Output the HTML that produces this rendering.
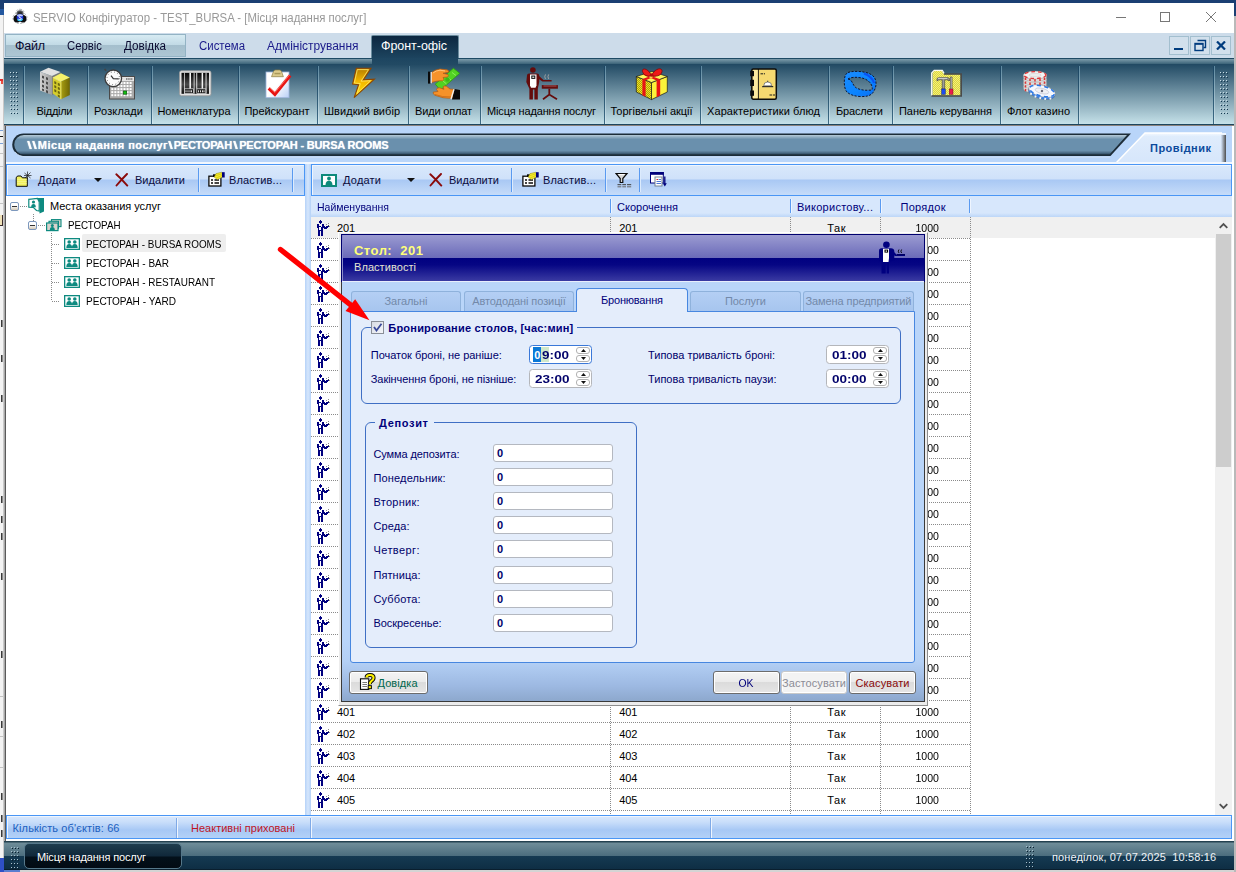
<!DOCTYPE html>
<html lang="uk"><head><meta charset="utf-8"><title>SERVIO Конфігуратор - TEST_BURSA - [Місця надання послуг]</title>
<style>
html,body{margin:0;padding:0;background:#fff;}
body{width:1236px;height:872px;overflow:hidden;font-family:"Liberation Sans",sans-serif;font-size:11px;}
#root{position:relative;width:1236px;height:872px;overflow:hidden;background:#fff;}
#root div,#root span.t,#root svg{position:absolute;box-sizing:border-box;}
span.t{white-space:pre;display:block;}

</style></head>
<body>
<div id="root">
<div style="left:0px;top:0px;width:1236px;height:872px;background:#f3f3f3;"></div>
<div style="left:0px;top:0px;width:1236px;height:3px;background:#1b3f73;"></div>
<div style="left:0px;top:0px;width:4px;height:9px;background:#1b3f73;"></div>
<div style="left:0px;top:9px;width:4px;height:6px;background:#2458a0;"></div>
<div style="left:1234px;top:0px;width:2px;height:16px;background:#1b3f73;"></div>
<div style="left:1234px;top:16px;width:2px;height:856px;background:#b9b9b9;"></div>
<div style="left:3px;top:15px;width:1px;height:857px;background:#c9c9c9;"></div>
<div style="left:0px;top:136px;width:3px;height:1px;background:#1a1a1a;"></div>
<div style="left:0px;top:130px;width:3px;height:1px;background:#7aa0d8;"></div>
<div style="left:0px;top:143px;width:3px;height:1px;background:#7aa0d8;"></div>
<div style="left:0px;top:153px;width:3px;height:1px;background:#c4c4c4;"></div>
<div style="left:0px;top:166px;width:3px;height:1px;background:#c4c4c4;"></div>
<div style="left:0px;top:203px;width:3px;height:1px;background:#c4c4c4;"></div>
<div style="left:0px;top:696px;width:3px;height:1px;background:#c4c4c4;"></div>
<div style="left:0px;top:736px;width:3px;height:1px;background:#c4c4c4;"></div>
<div style="left:0px;top:767px;width:3px;height:1px;background:#c4c4c4;"></div>
<div style="left:0px;top:215px;width:3px;height:11px;background:#f0e2b8;border-right:1px solid #3a2a2a;border-bottom:1px solid #3a2a2a;"></div>
<div style="left:0px;top:320px;width:3px;height:7px;background:linear-gradient(90deg,#f3f3f3 0 1px,#3a3a3a 1px 2px,#8a8a8a 2px 3px);"></div>
<div style="left:0px;top:355px;width:3px;height:7px;background:linear-gradient(90deg,#f3f3f3 0 1px,#3a3a3a 1px 2px,#8a8a8a 2px 3px);"></div>
<div style="left:0px;top:395px;width:3px;height:7px;background:linear-gradient(90deg,#f3f3f3 0 1px,#3a3a3a 1px 2px,#8a8a8a 2px 3px);"></div>
<div style="left:0px;top:496px;width:3px;height:7px;background:linear-gradient(90deg,#f3f3f3 0 1px,#3a3a3a 1px 2px,#8a8a8a 2px 3px);"></div>
<div style="left:0px;top:516px;width:3px;height:7px;background:linear-gradient(90deg,#f3f3f3 0 1px,#3a3a3a 1px 2px,#8a8a8a 2px 3px);"></div>
<div style="left:0px;top:533px;width:3px;height:7px;background:linear-gradient(90deg,#f3f3f3 0 1px,#3a3a3a 1px 2px,#8a8a8a 2px 3px);"></div>
<div style="left:0px;top:573px;width:3px;height:7px;background:linear-gradient(90deg,#f3f3f3 0 1px,#3a3a3a 1px 2px,#8a8a8a 2px 3px);"></div>
<div style="left:0px;top:651px;width:3px;height:7px;background:linear-gradient(90deg,#f3f3f3 0 1px,#3a3a3a 1px 2px,#8a8a8a 2px 3px);"></div>
<div style="left:0px;top:721px;width:3px;height:7px;background:linear-gradient(90deg,#f3f3f3 0 1px,#3a3a3a 1px 2px,#8a8a8a 2px 3px);"></div>
<div style="left:0px;top:793px;width:3px;height:7px;background:linear-gradient(90deg,#f3f3f3 0 1px,#3a3a3a 1px 2px,#8a8a8a 2px 3px);"></div>
<div style="left:0px;top:815px;width:3px;height:7px;background:linear-gradient(90deg,#f3f3f3 0 1px,#3a3a3a 1px 2px,#8a8a8a 2px 3px);"></div>
<div style="left:0px;top:830px;width:3px;height:7px;background:linear-gradient(90deg,#f3f3f3 0 1px,#3a3a3a 1px 2px,#8a8a8a 2px 3px);"></div>
<div style="left:0px;top:79px;width:3px;height:2px;background:#e03030;"></div>
<div style="left:1px;top:81px;width:2px;height:3px;background:#e85040;"></div>
<div style="left:4px;top:3px;width:1230px;height:868px;background:#fff;"></div>
<svg style="left:11px;top:8px" width="18" height="18" viewBox="0 0 18 18"><path d="M9 1.300Q13 1.300 13.300 5.500Q16.800 7.500 15.800 11.500Q14.500 15.500 9 15.500Q3.500 15.500 2.200 11.500Q1.200 7.500 4.700 5.500Q5 1.300 9 1.300z" fill="none" stroke="#8a8f96" stroke-width="0.700" stroke-dasharray="2 1.300"/><circle cx="9" cy="5.800" r="3.600" fill="#55585e"/><circle cx="9" cy="5.800" r="2.200" fill="#2a2c30"/><circle cx="6.200" cy="10.800" r="3.700" fill="#0c0c0e"/><circle cx="11.800" cy="10.800" r="3.700" fill="#0c0c0e"/><circle cx="9" cy="9.300" r="3.300" fill="#2338d8"/><path d="M6.300 7.800Q9 5.800 11.700 7.800" stroke="#c8d4ff" stroke-width="1.200" fill="none"/><path d="M6.500 11.300Q9 13.600 11.600 11.100" stroke="#35c8f5" stroke-width="1.700" fill="none"/><path d="M10.600 8Q9 7.200 7.900 8.200Q7.500 9.300 9 9.600Q10.700 10 10.200 11.100Q9 11.900 7.500 11.100" stroke="#e8eeff" stroke-width="1" fill="none"/></svg>
<span class="t" style="left:33.00px;top:10.04px;font-size:12px;line-height:16px;color:#999;transform:scaleX(0.9489);transform-origin:0 50%;">SERVIO Конфігуратор - TEST_BURSA - [Місця надання послуг]</span>
<div style="left:1116px;top:17px;width:10px;height:1px;background:#777;"></div>
<div style="left:1160px;top:12px;width:10px;height:10px;border:1px solid #777;"></div>
<svg style="left:1206px;top:12px" width="10" height="10" viewBox="0 0 10 10"><path d="M0 0L10 10M10 0L0 10" stroke="#777" stroke-width="1"/></svg>
<div style="left:4px;top:33px;width:1230px;height:25px;background:#cddcea;"></div>
<div style="left:5px;top:34px;width:181px;height:23px;background:linear-gradient(#d7ebf3 0%,#c2dae5 46%,#a5bfcd 50%,#adc6d3 100%);border:1px solid #93b3c4;"></div>
<span class="t" style="left:15.00px;top:37.62px;font-size:12.5px;line-height:16.5px;color:#0a0a30;letter-spacing:-0.244px;">Файл</span>
<span class="t" style="left:67.00px;top:37.62px;font-size:12.5px;line-height:16.5px;color:#0a0a30;transform:scaleX(0.9068);transform-origin:0 50%;">Сервіс</span>
<span class="t" style="left:124.00px;top:37.62px;font-size:12.5px;line-height:16.5px;color:#0a0a30;transform:scaleX(0.9341);transform-origin:0 50%;">Довідка</span>
<span class="t" style="left:198.50px;top:37.62px;font-size:12.5px;line-height:16.5px;color:#1a1a8a;transform:scaleX(0.9138);transform-origin:0 50%;">Система</span>
<span class="t" style="left:267.00px;top:37.62px;font-size:12.5px;line-height:16.5px;color:#1a1a8a;transform:scaleX(0.9557);transform-origin:0 50%;">Адміністрування</span>
<div style="left:371px;top:35px;width:88px;height:24px;background:linear-gradient(#0c2740,#1d4560);border:1px solid #6a8c9e;border-bottom:none;border-radius:2px 2px 0 0;"></div>
<span class="t" style="left:381.00px;top:37.62px;font-size:12.5px;line-height:16.5px;color:#fff;letter-spacing:-0.051px;">Фронт-офіс</span>
<div style="left:1169px;top:36px;width:20px;height:19px;border:1px solid #a3bfcf;background:#d2e0ec;"></div>
<div style="left:1190px;top:36px;width:20px;height:19px;border:1px solid #a3bfcf;background:#d2e0ec;"></div>
<div style="left:1211px;top:36px;width:20px;height:19px;border:1px solid #a3bfcf;background:#d2e0ec;"></div>
<div style="left:1174px;top:48px;width:9px;height:2px;background:#003c7e;"></div>
<svg style="left:1194px;top:39px" width="13" height="13" viewBox="0 0 13 13"><path d="M3.5 1.5h8v7h-2" stroke="#003c7e" stroke-width="1.4" fill="none"/><rect x="1" y="4.5" width="8" height="7" stroke="#003c7e" stroke-width="1.4" fill="none"/><path d="M1 5h8" stroke="#003c7e" stroke-width="1.6"/></svg>
<svg style="left:1216px;top:41px" width="10" height="9" viewBox="0 0 10 9"><path d="M1 0.5L9 8.5M9 0.5L1 8.5" stroke="#003c7e" stroke-width="2.2"/></svg>
<div style="left:4px;top:58px;width:1230px;height:67px;background:linear-gradient(#1e4a64 0px,#1e4a64 1px,#7d9cab 1px,#3a6278 6px,#224a64 6.500px,#c4e0e8 65.500px,#1e465e 65.500px,#1e465e 67px);"></div>
<div style="left:372px;top:58px;width:86px;height:7px;background:linear-gradient(#1d4560,#224a64);"></div>
<div style="left:23px;top:66px;width:1px;height:58px;background:linear-gradient(#1c4663,#3d6a84);"></div>
<div style="left:24px;top:66px;width:1px;height:58px;background:linear-gradient(#5d889f,#d4e9f0);"></div>
<div style="left:87px;top:66px;width:1px;height:58px;background:linear-gradient(#1c4663,#3d6a84);"></div>
<div style="left:88px;top:66px;width:1px;height:58px;background:linear-gradient(#5d889f,#d4e9f0);"></div>
<div style="left:151px;top:66px;width:1px;height:58px;background:linear-gradient(#1c4663,#3d6a84);"></div>
<div style="left:152px;top:66px;width:1px;height:58px;background:linear-gradient(#5d889f,#d4e9f0);"></div>
<div style="left:238px;top:66px;width:1px;height:58px;background:linear-gradient(#1c4663,#3d6a84);"></div>
<div style="left:239px;top:66px;width:1px;height:58px;background:linear-gradient(#5d889f,#d4e9f0);"></div>
<div style="left:317px;top:66px;width:1px;height:58px;background:linear-gradient(#1c4663,#3d6a84);"></div>
<div style="left:318px;top:66px;width:1px;height:58px;background:linear-gradient(#5d889f,#d4e9f0);"></div>
<div style="left:408px;top:66px;width:1px;height:58px;background:linear-gradient(#1c4663,#3d6a84);"></div>
<div style="left:409px;top:66px;width:1px;height:58px;background:linear-gradient(#5d889f,#d4e9f0);"></div>
<div style="left:480px;top:66px;width:1px;height:58px;background:linear-gradient(#1c4663,#3d6a84);"></div>
<div style="left:481px;top:66px;width:1px;height:58px;background:linear-gradient(#5d889f,#d4e9f0);"></div>
<div style="left:604px;top:66px;width:1px;height:58px;background:linear-gradient(#1c4663,#3d6a84);"></div>
<div style="left:605px;top:66px;width:1px;height:58px;background:linear-gradient(#5d889f,#d4e9f0);"></div>
<div style="left:700px;top:66px;width:1px;height:58px;background:linear-gradient(#1c4663,#3d6a84);"></div>
<div style="left:701px;top:66px;width:1px;height:58px;background:linear-gradient(#5d889f,#d4e9f0);"></div>
<div style="left:828px;top:66px;width:1px;height:58px;background:linear-gradient(#1c4663,#3d6a84);"></div>
<div style="left:829px;top:66px;width:1px;height:58px;background:linear-gradient(#5d889f,#d4e9f0);"></div>
<div style="left:892px;top:66px;width:1px;height:58px;background:linear-gradient(#1c4663,#3d6a84);"></div>
<div style="left:893px;top:66px;width:1px;height:58px;background:linear-gradient(#5d889f,#d4e9f0);"></div>
<div style="left:1000px;top:66px;width:1px;height:58px;background:linear-gradient(#1c4663,#3d6a84);"></div>
<div style="left:1001px;top:66px;width:1px;height:58px;background:linear-gradient(#5d889f,#d4e9f0);"></div>
<div style="left:1078px;top:66px;width:1px;height:58px;background:linear-gradient(#1c4663,#3d6a84);"></div>
<div style="left:1079px;top:66px;width:1px;height:58px;background:linear-gradient(#5d889f,#d4e9f0);"></div>
<div style="left:1213px;top:66px;width:1px;height:58px;background:linear-gradient(#1c4663,#3d6a84);"></div>
<div style="left:1214px;top:66px;width:1px;height:58px;background:linear-gradient(#5d889f,#d4e9f0);"></div>
<svg style="left:10px;top:72px" width="9" height="44"><rect x="0" y="0" width="1" height="1" fill="#c9dde6"/><rect x="1" y="1" width="1" height="1" fill="#15384f"/><rect x="3" y="0" width="1" height="1" fill="#c9dde6"/><rect x="4" y="1" width="1" height="1" fill="#15384f"/><rect x="6" y="0" width="1" height="1" fill="#c9dde6"/><rect x="7" y="1" width="1" height="1" fill="#15384f"/><rect x="0" y="4" width="1" height="1" fill="#c9dde6"/><rect x="1" y="5" width="1" height="1" fill="#15384f"/><rect x="3" y="4" width="1" height="1" fill="#c9dde6"/><rect x="4" y="5" width="1" height="1" fill="#15384f"/><rect x="6" y="4" width="1" height="1" fill="#c9dde6"/><rect x="7" y="5" width="1" height="1" fill="#15384f"/><rect x="0" y="8" width="1" height="1" fill="#c9dde6"/><rect x="1" y="9" width="1" height="1" fill="#15384f"/><rect x="3" y="8" width="1" height="1" fill="#c9dde6"/><rect x="4" y="9" width="1" height="1" fill="#15384f"/><rect x="6" y="8" width="1" height="1" fill="#c9dde6"/><rect x="7" y="9" width="1" height="1" fill="#15384f"/><rect x="0" y="12" width="1" height="1" fill="#c9dde6"/><rect x="1" y="13" width="1" height="1" fill="#15384f"/><rect x="3" y="12" width="1" height="1" fill="#c9dde6"/><rect x="4" y="13" width="1" height="1" fill="#15384f"/><rect x="6" y="12" width="1" height="1" fill="#c9dde6"/><rect x="7" y="13" width="1" height="1" fill="#15384f"/><rect x="0" y="16" width="1" height="1" fill="#c9dde6"/><rect x="1" y="17" width="1" height="1" fill="#15384f"/><rect x="3" y="16" width="1" height="1" fill="#c9dde6"/><rect x="4" y="17" width="1" height="1" fill="#15384f"/><rect x="6" y="16" width="1" height="1" fill="#c9dde6"/><rect x="7" y="17" width="1" height="1" fill="#15384f"/><rect x="0" y="20" width="1" height="1" fill="#c9dde6"/><rect x="1" y="21" width="1" height="1" fill="#15384f"/><rect x="3" y="20" width="1" height="1" fill="#c9dde6"/><rect x="4" y="21" width="1" height="1" fill="#15384f"/><rect x="6" y="20" width="1" height="1" fill="#c9dde6"/><rect x="7" y="21" width="1" height="1" fill="#15384f"/><rect x="0" y="24" width="1" height="1" fill="#c9dde6"/><rect x="1" y="25" width="1" height="1" fill="#15384f"/><rect x="3" y="24" width="1" height="1" fill="#c9dde6"/><rect x="4" y="25" width="1" height="1" fill="#15384f"/><rect x="6" y="24" width="1" height="1" fill="#c9dde6"/><rect x="7" y="25" width="1" height="1" fill="#15384f"/><rect x="0" y="28" width="1" height="1" fill="#c9dde6"/><rect x="1" y="29" width="1" height="1" fill="#15384f"/><rect x="3" y="28" width="1" height="1" fill="#c9dde6"/><rect x="4" y="29" width="1" height="1" fill="#15384f"/><rect x="6" y="28" width="1" height="1" fill="#c9dde6"/><rect x="7" y="29" width="1" height="1" fill="#15384f"/><rect x="0" y="32" width="1" height="1" fill="#c9dde6"/><rect x="1" y="33" width="1" height="1" fill="#15384f"/><rect x="3" y="32" width="1" height="1" fill="#c9dde6"/><rect x="4" y="33" width="1" height="1" fill="#15384f"/><rect x="6" y="32" width="1" height="1" fill="#c9dde6"/><rect x="7" y="33" width="1" height="1" fill="#15384f"/><rect x="0" y="36" width="1" height="1" fill="#c9dde6"/><rect x="1" y="37" width="1" height="1" fill="#15384f"/><rect x="3" y="36" width="1" height="1" fill="#c9dde6"/><rect x="4" y="37" width="1" height="1" fill="#15384f"/><rect x="6" y="36" width="1" height="1" fill="#c9dde6"/><rect x="7" y="37" width="1" height="1" fill="#15384f"/><rect x="0" y="40" width="1" height="1" fill="#c9dde6"/><rect x="1" y="41" width="1" height="1" fill="#15384f"/><rect x="3" y="40" width="1" height="1" fill="#c9dde6"/><rect x="4" y="41" width="1" height="1" fill="#15384f"/><rect x="6" y="40" width="1" height="1" fill="#c9dde6"/><rect x="7" y="41" width="1" height="1" fill="#15384f"/></svg>
<svg style="left:1220px;top:72px" width="9" height="44"><rect x="0" y="0" width="1" height="1" fill="#c9dde6"/><rect x="1" y="1" width="1" height="1" fill="#15384f"/><rect x="3" y="0" width="1" height="1" fill="#c9dde6"/><rect x="4" y="1" width="1" height="1" fill="#15384f"/><rect x="6" y="0" width="1" height="1" fill="#c9dde6"/><rect x="7" y="1" width="1" height="1" fill="#15384f"/><rect x="0" y="4" width="1" height="1" fill="#c9dde6"/><rect x="1" y="5" width="1" height="1" fill="#15384f"/><rect x="3" y="4" width="1" height="1" fill="#c9dde6"/><rect x="4" y="5" width="1" height="1" fill="#15384f"/><rect x="6" y="4" width="1" height="1" fill="#c9dde6"/><rect x="7" y="5" width="1" height="1" fill="#15384f"/><rect x="0" y="8" width="1" height="1" fill="#c9dde6"/><rect x="1" y="9" width="1" height="1" fill="#15384f"/><rect x="3" y="8" width="1" height="1" fill="#c9dde6"/><rect x="4" y="9" width="1" height="1" fill="#15384f"/><rect x="6" y="8" width="1" height="1" fill="#c9dde6"/><rect x="7" y="9" width="1" height="1" fill="#15384f"/><rect x="0" y="12" width="1" height="1" fill="#c9dde6"/><rect x="1" y="13" width="1" height="1" fill="#15384f"/><rect x="3" y="12" width="1" height="1" fill="#c9dde6"/><rect x="4" y="13" width="1" height="1" fill="#15384f"/><rect x="6" y="12" width="1" height="1" fill="#c9dde6"/><rect x="7" y="13" width="1" height="1" fill="#15384f"/><rect x="0" y="16" width="1" height="1" fill="#c9dde6"/><rect x="1" y="17" width="1" height="1" fill="#15384f"/><rect x="3" y="16" width="1" height="1" fill="#c9dde6"/><rect x="4" y="17" width="1" height="1" fill="#15384f"/><rect x="6" y="16" width="1" height="1" fill="#c9dde6"/><rect x="7" y="17" width="1" height="1" fill="#15384f"/><rect x="0" y="20" width="1" height="1" fill="#c9dde6"/><rect x="1" y="21" width="1" height="1" fill="#15384f"/><rect x="3" y="20" width="1" height="1" fill="#c9dde6"/><rect x="4" y="21" width="1" height="1" fill="#15384f"/><rect x="6" y="20" width="1" height="1" fill="#c9dde6"/><rect x="7" y="21" width="1" height="1" fill="#15384f"/><rect x="0" y="24" width="1" height="1" fill="#c9dde6"/><rect x="1" y="25" width="1" height="1" fill="#15384f"/><rect x="3" y="24" width="1" height="1" fill="#c9dde6"/><rect x="4" y="25" width="1" height="1" fill="#15384f"/><rect x="6" y="24" width="1" height="1" fill="#c9dde6"/><rect x="7" y="25" width="1" height="1" fill="#15384f"/><rect x="0" y="28" width="1" height="1" fill="#c9dde6"/><rect x="1" y="29" width="1" height="1" fill="#15384f"/><rect x="3" y="28" width="1" height="1" fill="#c9dde6"/><rect x="4" y="29" width="1" height="1" fill="#15384f"/><rect x="6" y="28" width="1" height="1" fill="#c9dde6"/><rect x="7" y="29" width="1" height="1" fill="#15384f"/><rect x="0" y="32" width="1" height="1" fill="#c9dde6"/><rect x="1" y="33" width="1" height="1" fill="#15384f"/><rect x="3" y="32" width="1" height="1" fill="#c9dde6"/><rect x="4" y="33" width="1" height="1" fill="#15384f"/><rect x="6" y="32" width="1" height="1" fill="#c9dde6"/><rect x="7" y="33" width="1" height="1" fill="#15384f"/><rect x="0" y="36" width="1" height="1" fill="#c9dde6"/><rect x="1" y="37" width="1" height="1" fill="#15384f"/><rect x="3" y="36" width="1" height="1" fill="#c9dde6"/><rect x="4" y="37" width="1" height="1" fill="#15384f"/><rect x="6" y="36" width="1" height="1" fill="#c9dde6"/><rect x="7" y="37" width="1" height="1" fill="#15384f"/><rect x="0" y="40" width="1" height="1" fill="#c9dde6"/><rect x="1" y="41" width="1" height="1" fill="#15384f"/><rect x="3" y="40" width="1" height="1" fill="#c9dde6"/><rect x="4" y="41" width="1" height="1" fill="#15384f"/><rect x="6" y="40" width="1" height="1" fill="#c9dde6"/><rect x="7" y="41" width="1" height="1" fill="#15384f"/></svg>
<span class="t" style="left:36.50px;top:103.89px;font-size:11px;line-height:15px;color:#000;letter-spacing:-0.271px;">Відділи</span>
<span class="t" style="left:94.00px;top:103.89px;font-size:11px;line-height:15px;color:#000;letter-spacing:0.153px;">Розклади</span>
<span class="t" style="left:157.50px;top:103.89px;font-size:11px;line-height:15px;color:#000;letter-spacing:-0.075px;">Номенклатура</span>
<span class="t" style="left:244.50px;top:103.89px;font-size:11px;line-height:15px;color:#000;letter-spacing:-0.045px;">Прейскурант</span>
<span class="t" style="left:324.00px;top:103.89px;font-size:11px;line-height:15px;color:#000;letter-spacing:0.042px;">Швидкий вибір</span>
<span class="t" style="left:415.00px;top:103.89px;font-size:11px;line-height:15px;color:#000;letter-spacing:-0.167px;">Види оплат</span>
<span class="t" style="left:487.00px;top:103.89px;font-size:11px;line-height:15px;color:#000;letter-spacing:-0.148px;">Місця надання послуг</span>
<span class="t" style="left:610.50px;top:103.89px;font-size:11px;line-height:15px;color:#000;letter-spacing:-0.030px;">Торгівельні акції</span>
<span class="t" style="left:707.00px;top:103.89px;font-size:11px;line-height:15px;color:#000;letter-spacing:0.096px;">Характеристики блюд</span>
<span class="t" style="left:836.00px;top:103.89px;font-size:11px;line-height:15px;color:#000;letter-spacing:-0.187px;">Браслети</span>
<span class="t" style="left:899.00px;top:103.89px;font-size:11px;line-height:15px;color:#000;letter-spacing:-0.037px;">Панель керування</span>
<span class="t" style="left:1007.00px;top:103.89px;font-size:11px;line-height:15px;color:#000;letter-spacing:0.006px;">Флот казино</span>
<svg style="left:39.0px;top:67px;overflow:visible" width="32" height="33" viewBox="0 0 32 33"><defs><linearGradient id="b1" x1="0" x2="1"><stop offset="0" stop-color="#d2d2d2"/><stop offset="1" stop-color="#9c9c9c"/></linearGradient>
<linearGradient id="b2" x1="0" x2="1"><stop offset="0" stop-color="#a89e12"/><stop offset="1" stop-color="#6e6604"/></linearGradient></defs>
<path d="M13 9L21.500 5.100V24L13 28z" fill="#7a7a7a"/><path d="M1 4.700L13 9V28L1 23.500z" fill="url(#b1)"/><path d="M1 4.700L9.500 0.800 21.500 5.100 13 9z" fill="#e2e2e2"/>
<g fill="#4a4a4a"><path d="M3 8.500l2 .8v2.400l-2-.8zM7 10l2 .8v2.400l-2-.8zM3 13l2 .8v2.400l-2-.8zM7 14.500l2 .8v2.400l-2-.8zM3 17.500l2 .8v2.400l-2-.8zM7 19l2 .8v2.400l-2-.8zM3 21.500l2 .8v2l-2-.8zM7 23l2 .8v2.600l-2-.8z"/></g>
<path d="M22 14.600L30.800 10.500V28L22 32.300z" fill="url(#b2)"/><path d="M13.800 10.500L22 14.600V32.300L13.800 26.500z" fill="#d6ce2c"/><path d="M13.800 10.500L22 6.300 30.800 10.500 22 14.600z" fill="#f6f26a"/>
<g fill="#6a6410"><path d="M15.300 14l2 1v2.400l-2-1zM18.800 15.800l2 1v2.400l-2-1zM15.300 18l2 1v2.400l-2-1zM18.800 19.800l2 1v2.400l-2-1zM15.300 22l2 1v2.400l-2-1zM18.800 23.800l2 1v2.400l-2-1zM18.800 27.600l2 1v2.200l-2-1.200z"/></g>
<path d="M13.800 10.500L22 14.600V32.300" stroke="#f8f6a0" stroke-width="0.600" fill="none"/></svg>
<svg style="left:103.0px;top:67px;overflow:visible" width="32" height="33" viewBox="0 0 32 33"><rect x="6.500" y="9.500" width="25" height="22.500" fill="#a9a9a9" stroke="#4a4a4a" stroke-width="1"/><rect x="7" y="10" width="24" height="4" fill="#e4e4e4"/><path d="M23 12h7" stroke="#333" stroke-width="1" stroke-dasharray="1.500 0.700"/><rect x="8.30" y="15.00" width="2" height="2" fill="#fff"/><rect x="11.35" y="15.00" width="2" height="2" fill="#fff"/><rect x="14.40" y="15.00" width="2" height="2" fill="#fff"/><rect x="17.45" y="15.00" width="2" height="2" fill="#fff"/><rect x="20.50" y="15.00" width="2" height="2" fill="#fff"/><rect x="23.55" y="15.00" width="2" height="2" fill="#fff"/><rect x="26.60" y="15.00" width="2" height="2" fill="#fff"/><rect x="8.30" y="18.05" width="2" height="2" fill="#fff"/><rect x="11.35" y="18.05" width="2" height="2" fill="#fff"/><rect x="14.40" y="18.05" width="2" height="2" fill="#fff"/><rect x="17.45" y="18.05" width="2" height="2" fill="#fff"/><rect x="20.50" y="18.05" width="2" height="2" fill="#fff"/><rect x="23.55" y="18.05" width="2" height="2" fill="#fff"/><rect x="26.60" y="18.05" width="2" height="2" fill="#fff"/><rect x="8.30" y="21.10" width="2" height="2" fill="#fff"/><rect x="11.35" y="21.10" width="2" height="2" fill="#fff"/><rect x="14.40" y="21.10" width="2" height="2" fill="#fff"/><rect x="17.45" y="21.10" width="2" height="2" fill="#fff"/><rect x="20.50" y="21.10" width="2" height="2" fill="#fff"/><rect x="23.55" y="21.10" width="2" height="2" fill="#fff"/><rect x="26.60" y="21.10" width="2" height="2" fill="#fff"/><rect x="8.30" y="24.15" width="2" height="2" fill="#fff"/><rect x="11.35" y="24.15" width="2" height="2" fill="#fff"/><rect x="14.40" y="24.15" width="2" height="2" fill="#fff"/><rect x="17.45" y="24.15" width="2" height="2" fill="#fff"/><rect x="20.50" y="24.15" width="2" height="2" fill="#fff"/><rect x="23.55" y="24.15" width="2" height="2" fill="#fff"/><rect x="26.60" y="24.15" width="2" height="2" fill="#fff"/><rect x="8.30" y="27.20" width="2" height="2" fill="#fff"/><rect x="11.35" y="27.20" width="2" height="2" fill="#fff"/><rect x="14.40" y="27.20" width="2" height="2" fill="#fff"/><rect x="17.45" y="27.20" width="2" height="2" fill="#fff"/><rect x="20.50" y="27.20" width="2" height="2" fill="#fff"/><rect x="23.55" y="27.20" width="2" height="2" fill="#fff"/><rect x="26.60" y="27.20" width="2" height="2" fill="#fff"/><rect x="20.500" y="24" width="3.200" height="3.200" fill="#12c412" stroke="#0a5a0a" stroke-width="0.700"/>
<path d="M3.200 3.800L1.500 2" stroke="#444" stroke-width="1.600"/><circle cx="10.300" cy="11.300" r="8.300" fill="#fbfbfb" stroke="#3c3c3c" stroke-width="1.300"/><circle cx="10.300" cy="11.300" r="6.300" fill="none" stroke="#555" stroke-width="0.900" stroke-dasharray="0.900 2.400"/><path d="M8 8.600L10.300 11.600 15.800 11.800" stroke="#333" stroke-width="1.200" fill="none"/></svg>
<svg style="left:178.5px;top:67px;overflow:visible" width="32" height="33" viewBox="0 0 32 33"><defs><linearGradient id="bc" x1="0" y1="0" x2="0" y2="1"><stop offset="0" stop-color="#050505"/><stop offset="0.550" stop-color="#4a4a4a"/><stop offset="1" stop-color="#101010"/></linearGradient></defs>
<rect x="0.500" y="3.800" width="31.500" height="25" rx="2" fill="#e2e2e2" stroke="#9a9a9a" stroke-width="0.800"/><rect x="2.500" y="5.800" width="27.500" height="21" fill="url(#bc)"/>
<g fill="#f2f2f2"><rect x="10.400" y="5.800" width="1.600" height="16"/><rect x="14.700" y="5.800" width="0.800" height="21"/><rect x="17.300" y="5.800" width="0.900" height="16"/><rect x="22.600" y="5.800" width="1.500" height="16"/><rect x="26.600" y="5.800" width="0.900" height="21"/><rect x="5" y="5.800" width="0.700" height="21"/></g>
<rect x="5.500" y="21.800" width="9" height="4.800" fill="#1a1a1a" stroke="#e8e8e8" stroke-width="0.700"/><rect x="17.800" y="21.800" width="9" height="4.800" fill="#1a1a1a" stroke="#e8e8e8" stroke-width="0.700"/>
<path d="M7 23.300v2M9 23.300v2M11 23.300v2M12.500 23.300v2M19.500 23.300v2M21.500 23.300v2M23.500 23.300v2M25 23.300v2" stroke="#f0f0f0" stroke-width="0.900"/></svg>
<svg style="left:261.5px;top:67px;overflow:visible" width="32" height="33" viewBox="0 0 32 33"><defs><linearGradient id="cp" x1="0" y1="0" x2="1" y2="1"><stop offset="0.500" stop-color="#ffffff"/><stop offset="1" stop-color="#b9d0f6"/></linearGradient></defs>
<rect x="4" y="5" width="23" height="25.700" fill="url(#cp)" stroke="#9db4dc" stroke-width="0.800"/><path d="M9.500 9.700L11.500 4.500Q12 3 13.500 3H17.500Q19 3 19.500 4.500L21.400 9.700z" fill="#dccb8c" stroke="#8c7c44" stroke-width="0.700"/><rect x="12.500" y="5.800" width="6" height="1.500" fill="#a8985a"/>
<path d="M6.700 21.300L12.900 27.300 28.200 8.600" stroke="#e81414" stroke-width="3.200" fill="none" stroke-linejoin="miter"/><path d="M7.500 20.500L13 25.500 27.500 8" stroke="#ff7a6a" stroke-width="0.800" fill="none"/></svg>
<svg style="left:346.5px;top:67px;overflow:visible" width="32" height="33" viewBox="0 0 32 33"><defs><linearGradient id="lt" x1="0" y1="0" x2="0" y2="1"><stop offset="0" stop-color="#b47c00"/><stop offset="0.450" stop-color="#f4b800"/><stop offset="1" stop-color="#ffe200"/></linearGradient></defs>
<path d="M9.300 1.200H24L16.300 12.900 27.400 12.200 7.100 30.700 11.600 17.700 5.600 17.100z" fill="url(#lt)" stroke="#8c4600" stroke-width="1.100" stroke-linejoin="miter"/><path d="M10.300 2.600H21.500L14 14.200 23.500 13.700 10 26.500 13.300 16.600 7.300 16z" fill="none" stroke="#ffe86a" stroke-width="0.800"/></svg>
<svg style="left:428.0px;top:67px;overflow:visible" width="32" height="33" viewBox="0 0 32 33"><path d="M25.400 1.200L31.700 6.300 12.400 23.300 7.300 17.100z" fill="#52d222" stroke="#2c9a10" stroke-width="0.800"/><path d="M24 5.500L28 8.500M19 9.500l4 3.500M14.500 13.500l4 3.500" stroke="#8cf05a" stroke-width="1"/><circle cx="19.500" cy="12.500" r="2.200" fill="#3cb818"/>
<path d="M3.500 5.500Q7 2.500 12 2L19 2.800Q21.500 3.800 20.500 5.300L15 6.300 20 7.500Q21 9 19.500 10L15 10.500 16 12.500Q15 14.300 12 13.800L8 14.300 3.500 15.500z" fill="#f6922a" stroke="#b45a10" stroke-width="0.700"/><path d="M5 6Q8 3.500 12 3.200L17 4" stroke="#ffc47a" stroke-width="1" fill="none"/>
<rect x="0" y="4.600" width="2.600" height="12" fill="#0a0a0a"/><rect x="2.600" y="5" width="1.200" height="11.300" fill="#f2f2f2"/>
<path d="M25.500 31Q20 31.500 15 30.700L7 28.300Q4.500 27 5.300 25L10 24.500 8.500 22.500Q9 20.500 11.500 20.800L16 22.300 15 19.800Q16.500 18.300 18.500 19.300L22 22 26 22.300z" fill="#f6922a" stroke="#b45a10" stroke-width="0.700"/><path d="M7 27.500Q14 30.500 24 30" stroke="#d0701a" stroke-width="1" fill="none"/>
<path d="M26.500 22L32 23V32.500H24z" fill="#0a0a0a"/><path d="M26 22.200L23 32" stroke="#f2f2f2" stroke-width="1.300"/></svg>
<svg style="left:526.0px;top:67px;overflow:visible" width="32" height="33" viewBox="0 0 32 33"><circle cx="6.900" cy="3" r="2.800" fill="#640c0c"/><path d="M1 8.500Q1 6.500 3 6.500H11Q13.200 6.500 13.200 8.500V15L11.800 21.700V32.400H8.400V22.500H6.900V32.400H3.400V21.700L0.300 15z" fill="#640c0c"/>
<path d="M4 7.500H10.500V18.500L9.500 20.800H5L4 18.500z" fill="#fff"/><rect x="5.300" y="8.500" width="4" height="3.400" fill="#111"/><rect x="6.300" y="9.600" width="2" height="1.200" fill="#fff"/>
<path d="M12.500 8.500L17.500 13H25.600V14.600H16.500L12 11.500z" fill="#640c0c"/><path d="M19.500 12q-1.500-2.300 0-4.600M22.700 12q-1.500-2.300 0-4.600" stroke="#a4a4a4" stroke-width="0.900" fill="none"/>
<path d="M15.800 18.100H31.900V21.700H15.800z" fill="#640c0c"/><path d="M17.500 19h13" stroke="#b06a6a" stroke-width="0.800"/><path d="M23.300 21.700V28.500M17 32.300L23.300 27.500 31 32.300" stroke="#640c0c" stroke-width="1.800" fill="none"/></svg>
<svg style="left:636.0px;top:67px;overflow:visible" width="32" height="33" viewBox="0 0 32 33"><defs><pattern id="dt" width="2" height="2" patternUnits="userSpaceOnUse"><rect width="2" height="2" fill="#f2e81c"/><rect width="1" height="1" fill="#a89c10"/><rect x="1" y="1" width="1" height="1" fill="#a89c10"/></pattern></defs>
<path d="M0.300 9.500L15.500 15.500V32.600L0.300 25z" fill="url(#dt)" stroke="#1a1a1a" stroke-width="0.700"/><path d="M15.500 15.500L31.300 9.500V25L15.500 32.600z" fill="#fbf23a" stroke="#1a1a1a" stroke-width="0.700"/><path d="M0.300 9.500L16 4.500 31.300 9.500 15.500 15.500z" fill="#fdf65a" stroke="#1a1a1a" stroke-width="0.700"/>
<path d="M6.400 12V28.200L9.600 29.800V13.200zM20.600 13.500V30.200L24.200 28.500V12.200z" fill="#e61414"/><path d="M6.400 12L22 6.500 24.200 7.300 9.600 13.200zM24.200 12.200L9 6.800 6.800 7.600 20.600 13.500z" fill="#e61414"/>
<path d="M15.500 8.500C12 1 5.500 0.500 6.500 4.500S12 10 15.500 8.500C19 1 26.500 0 26 4.500S19 10 15.500 8.500z" fill="#ee1818" stroke="#7a0808" stroke-width="0.800"/><circle cx="15.600" cy="8" r="1.800" fill="#b00c0c"/></svg>
<svg style="left:748.0px;top:67px;overflow:visible" width="32" height="33" viewBox="0 0 32 33"><rect x="3.800" y="1.900" width="24.500" height="30.300" rx="1.500" fill="#f6d970" stroke="#0c0c0c" stroke-width="1.500"/><path d="M10.300 2V32" stroke="#0c0c0c" stroke-width="1"/><rect x="5" y="3" width="4.700" height="28" fill="#fbe9a0"/>
<rect x="2.200" y="3.900" width="3.800" height="5.300" fill="#0c0c0c"/><rect x="2.200" y="12.800" width="3.800" height="6.200" fill="#0c0c0c"/><rect x="2.200" y="23.500" width="3.800" height="5.300" fill="#0c0c0c"/>
<path d="M14.200 19.600H25.200" stroke="#2a2a2a" stroke-width="1.200"/><path d="M15.700 18.800A4 3.800 0 0 1 23.700 18.800z" fill="#fff" stroke="#5a5a5a" stroke-width="0.700"/><rect x="19.200" y="13.700" width="1" height="1.300" fill="#444"/>
<path d="M12.500 6.800H17M21.500 28H27" stroke="#1a1a1a" stroke-width="1" stroke-dasharray="2.500 0.800"/></svg>
<svg style="left:844.0px;top:67px;overflow:visible" width="32" height="33" viewBox="0 0 32 33"><defs><linearGradient id="br" x1="0" y1="0" x2="1" y2="1"><stop offset="0" stop-color="#1a8cff"/><stop offset="0.600" stop-color="#0a84ff"/><stop offset="1" stop-color="#0a6cf0"/></linearGradient></defs>
<path fill-rule="evenodd" fill="url(#br)" stroke="#0a0a1e" stroke-width="0.900" stroke-dasharray="2.200 1.400" d="M4 5.500C8 4 16 4 22 5.500S31 10 31.800 14 31.500 22 29 25.500 22 29.800 16 29.500 6 27.500 3.500 25.500 0.300 19 0.300 15 1 7 4 5.500zM4 12C7 10 12 10 17 10.800S27 15 28 19.500 27 23 24 23.200 17 23 13.500 21.500 9.500 17.500 8 15 5.500 12.500 4 12z"/>
<path d="M20 6.500Q28 9.500 30 16" stroke="#0a3cf0" stroke-width="2.200" fill="none" opacity="0.700"/></svg>
<svg style="left:930.0px;top:67px;overflow:visible" width="32" height="33" viewBox="0 0 32 33"><defs><pattern id="fd" width="2" height="2" patternUnits="userSpaceOnUse"><rect width="2" height="2" fill="#f4f07a"/><rect width="1" height="1" fill="#dcd640"/><rect x="1" y="1" width="1" height="1" fill="#dcd640"/></pattern></defs>
<path d="M2.500 6L4.500 3.800H12L14 7.300H30.500V28.500H2.500z" fill="url(#fd)"/><path d="M1.700 28.800V6L4.200 3.300H12.300L14.300 6.800" stroke="#fbfbf0" stroke-width="1.300" fill="none"/><path d="M14 7H31.200V29H1.500" stroke="#4a4a4a" stroke-width="1.600" fill="none"/>
<path d="M7 11.500Q8 10.300 10 10.500H17.500Q20 10.800 20 13.500H18V12.800H14.700V22H12.200V12.800H9.500Q8 13 7 14z" fill="#9a9a9a" stroke="#3a3a3a" stroke-width="0.600"/><path d="M8 11.300H17" stroke="#e8e8e8" stroke-width="0.800"/>
<rect x="11.700" y="22" width="3.600" height="5.300" fill="#1c4cf0" stroke="#0a1a7a" stroke-width="0.500"/><path d="M19.800 10V14L21 15V22.300" stroke="#3a3a3a" stroke-width="0" fill="none"/><rect x="20.200" y="10" width="1.900" height="12.500" fill="#b4b4b4" stroke="#3a3a3a" stroke-width="0.500"/><rect x="19.300" y="22" width="3.700" height="5.300" fill="#e81c4c" stroke="#7a0a1a" stroke-width="0.500"/></svg>
<svg style="left:1023.0px;top:67px;overflow:visible" width="32" height="33" viewBox="0 0 32 33"><path d="M0.5 19.5v2.600a11.5 3.8 0 0 0 23.0 0v-2.600z" fill="#e2dede" stroke="#8a8a8a" stroke-width="0.400"/><ellipse cx="12" cy="19.5" rx="11.5" ry="3.8" fill="#f4f2f2" stroke="#9a9a9a" stroke-width="0.400"/><path d="M2.500 22.0v2.300M7 23.1v2.400M12 23.4v2.500M17 23.1v2.400M21.500 22.0v2.300" stroke="#dc3434" stroke-width="1.500"/><path d="M0.5 15.7v2.600a11.5 3.8 0 0 0 23.0 0v-2.600z" fill="#e2dede" stroke="#8a8a8a" stroke-width="0.400"/><ellipse cx="12" cy="15.7" rx="11.5" ry="3.8" fill="#f4f2f2" stroke="#9a9a9a" stroke-width="0.400"/><path d="M2.500 18.2v2.300M7 19.3v2.400M12 19.599999999999998v2.500M17 19.3v2.400M21.500 18.2v2.300" stroke="#dc3434" stroke-width="1.500"/><path d="M0.5 11.9v2.600a11.5 3.8 0 0 0 23.0 0v-2.600z" fill="#e2dede" stroke="#8a8a8a" stroke-width="0.400"/><ellipse cx="12" cy="11.9" rx="11.5" ry="3.8" fill="#f4f2f2" stroke="#9a9a9a" stroke-width="0.400"/><path d="M2.500 14.4v2.300M7 15.5v2.400M12 15.8v2.500M17 15.5v2.400M21.500 14.4v2.300" stroke="#dc3434" stroke-width="1.500"/><path d="M0.5 8.1v2.600a11.5 3.8 0 0 0 23.0 0v-2.600z" fill="#e2dede" stroke="#8a8a8a" stroke-width="0.400"/><ellipse cx="12" cy="8.1" rx="11.5" ry="3.8" fill="#f4f2f2" stroke="#9a9a9a" stroke-width="0.400"/><path d="M2.500 10.6v2.300M7 11.7v2.400M12 12.0v2.500M17 11.7v2.400M21.500 10.6v2.300" stroke="#dc3434" stroke-width="1.500"/><ellipse cx="12" cy="8.100" rx="11.500" ry="3.800" fill="#f4f4f4" stroke="#9a9a9a" stroke-width="0.400"/><ellipse cx="12" cy="8.100" rx="11" ry="3.400" fill="none" stroke="#e03434" stroke-width="1.300" stroke-dasharray="3.500 3"/><ellipse cx="12" cy="8.100" rx="6" ry="1.800" fill="#ededed" stroke="#c8c8c8" stroke-width="0.500"/>
<g transform="rotate(14 19 24)"><path d="M5.500 24v2.300a13.500 5.600 0 0 0 27 0V24z" fill="#3a84ea" stroke="#6a6a6a" stroke-width="0.400"/><path d="M9 28.300v2M14 29.800v2.100M19 30.100v2.100M24 29.800v2.100M29 28.300v2" stroke="#f4f4f4" stroke-width="1.800"/><ellipse cx="19" cy="24" rx="13.500" ry="5.600" fill="#f6f8ff" stroke="#8a8a8a" stroke-width="0.400"/><ellipse cx="19" cy="24" rx="12.700" ry="5" fill="none" stroke="#2a78e6" stroke-width="1.500" stroke-dasharray="4 3.400"/><ellipse cx="19" cy="24" rx="7" ry="2.600" fill="#f0f0f4" stroke="#b4b4c4" stroke-width="0.500"/><circle cx="19" cy="24" r="1.200" fill="#6a6a7a"/></g></svg>
<div style="left:4px;top:125px;width:1230px;height:717px;background:#8a827c;"></div>
<div style="left:4px;top:126px;width:1px;height:716px;background:#a8a8a8;"></div>
<div style="left:5px;top:126px;width:1228px;height:716px;background:#5a5a5a;"></div>
<div style="left:6px;top:126px;width:1226px;height:716px;background:#b9d5f9;"></div>
<div style="left:1232px;top:126px;width:2px;height:716px;background:#fff;"></div>
<svg style="left:6px;top:126px" width="1226" height="38" viewBox="0 0 1226 38">
<defs><linearGradient id="pg" x1="0" y1="0" x2="0" y2="1"><stop offset="0" stop-color="#1d3a4e"/><stop offset="0.12" stop-color="#3b5c74"/><stop offset="0.25" stop-color="#6a90ad"/><stop offset="0.8" stop-color="#6a90ad"/><stop offset="0.92" stop-color="#3f627b"/><stop offset="1" stop-color="#1d3a4e"/></linearGradient>
<linearGradient id="tg" x1="0" y1="0" x2="0" y2="1"><stop offset="0" stop-color="#f4f9ff"/><stop offset="0.12" stop-color="#dfecfc"/><stop offset="1" stop-color="#d6e6fb"/></linearGradient>
<linearGradient id="sh" x1="0" y1="0" x2="1" y2="0"><stop offset="0" stop-color="#d6e6fb"/><stop offset="1" stop-color="#4d4d4d"/></linearGradient></defs>
<linearGradient id="pi" x1="0" y1="0" x2="0" y2="1"><stop offset="0" stop-color="#b6cad8"/><stop offset="0.100" stop-color="#93afc4"/><stop offset="0.220" stop-color="#6b90ad"/><stop offset="0.800" stop-color="#6b90ad"/><stop offset="0.920" stop-color="#4a6a84"/><stop offset="1" stop-color="#2c4558"/></linearGradient>
<filter id="bl" x="-2%" y="-20%" width="104%" height="140%"><feGaussianBlur stdDeviation="0.450"/></filter>
<path d="M17.5 7.500 H1125 L1104.500 30 H17.5 A11.250 11.250 0 0 1 17.5 7.500Z" fill="#1c2c38"/>
<path d="M18 9 H1121 L1103.500 28.500 H18 A9.750 9.750 0 0 1 18 9Z" fill="url(#pi)" filter="url(#bl)"/>
<path d="M9 26 Q13 30.800 20 31.200 H1104" stroke="#d4e4f6" stroke-width="1" fill="none" opacity="0.800"/>
<path d="M1139 7 H1220 V37 H1110Z" fill="url(#tg)"/>
<rect x="1215" y="9" width="5" height="28" fill="url(#sh)"/>
<path d="M1110 37 L1139 7 H1216" stroke="#fff" stroke-width="1.5" fill="none"/>
</svg>
<span class="t" style="left:26.80px;top:138.29px;font-size:11px;line-height:15px;color:#fff;font-weight:700;transform:scaleX(1.6360);transform-origin:0 50%;text-shadow:0 0 1px #dfe8f0;">\\</span>
<span class="t" style="left:37.80px;top:138.29px;font-size:11px;line-height:15px;color:#fff;font-weight:700;letter-spacing:0.512px;text-shadow:0 0 1px #dfe8f0;">Місця надання послуг</span>
<span class="t" style="left:168.30px;top:138.29px;font-size:11px;line-height:15px;color:#fff;font-weight:700;transform:scaleX(1.6360);transform-origin:0 50%;text-shadow:0 0 1px #dfe8f0;">\</span>
<span class="t" style="left:173.70px;top:138.29px;font-size:11px;line-height:15px;color:#fff;font-weight:700;letter-spacing:-0.172px;text-shadow:0 0 1px #dfe8f0;">РЕСТОРАН</span>
<span class="t" style="left:232.80px;top:138.29px;font-size:11px;line-height:15px;color:#fff;font-weight:700;transform:scaleX(1.6360);transform-origin:0 50%;text-shadow:0 0 1px #dfe8f0;">\</span>
<span class="t" style="left:239.20px;top:138.29px;font-size:11px;line-height:15px;color:#fff;font-weight:700;letter-spacing:-0.162px;text-shadow:0 0 1px #dfe8f0;">РЕСТОРАН - BURSA ROOMS</span>
<span class="t" style="left:1150.00px;top:140.69px;font-size:11px;line-height:15px;color:#0c4a9c;font-weight:700;letter-spacing:0.493px;">Провідник</span>
<div style="left:6px;top:162px;width:1226px;height:2px;background:#f2f7fe;"></div>
<div style="left:6px;top:164px;width:299px;height:32px;background:linear-gradient(#d9e8fb 0px,#cfe1fa 14px,#a9c8f4 15px,#c6dcf9 30px);border:1px solid #4a96f5;box-shadow:inset 1px 1px 0 #eef5ff;"></div>
<div style="left:311px;top:164px;width:921px;height:32px;background:linear-gradient(#d9e8fb 0px,#cfe1fa 14px,#a9c8f4 15px,#c6dcf9 30px);border:1px solid #4a96f5;box-shadow:inset 1px 1px 0 #eef5ff;"></div>
<div style="left:305px;top:164px;width:6px;height:652px;background:linear-gradient(90deg,#b5d2f8,#d5e6fc 50%,#b5d2f8);"></div>
<svg style="left:15px;top:171px" width="17" height="16" viewBox="0 0 17 16"><path d="M1.200 15.300V6.800L2.500 5H6L7.300 6.800H12.300V15.300z" fill="#f2f25e" stroke="#0a0a0a" stroke-width="1"/><path d="M2.500 8.500h9M2.500 10.500h9M2.500 12.500h9" stroke="#fafac8" stroke-width="0.700" stroke-dasharray="1 1"/><path d="M12.500 0.500V8M9.500 2L15.500 7M15.500 1.500L10 7M9 4.500H16.500" stroke="#1a1a1a" stroke-width="0.700"/></svg>
<span class="t" style="left:38.00px;top:172.89px;font-size:11px;line-height:15px;color:#0c0c3c;letter-spacing:0.215px;">Додати</span>
<svg style="left:94px;top:178px" width="8" height="4" viewBox="0 0 8 4"><path d="M0 0h8L4 4z" fill="#111"/></svg>
<svg style="left:115px;top:173px" width="14" height="14" viewBox="0 0 14 14"><path d="M1.300 1.300Q6 5.500 12.300 12.600M12 1Q7 6 1.500 12.500" stroke="#8a0a0a" stroke-width="1.900" stroke-linecap="round" fill="none"/></svg>
<span class="t" style="left:135.00px;top:172.89px;font-size:11px;line-height:15px;color:#0c0c3c;letter-spacing:0.034px;">Видалити</span>
<div style="left:198px;top:168px;width:1px;height:24px;background:#5a9af0;"></div>
<div style="left:199px;top:168px;width:1px;height:24px;background:#dcebfd;"></div>
<svg style="left:208px;top:171px" width="17" height="16" viewBox="0 0 17 16"><rect x="0.900" y="5.200" width="12" height="9.800" fill="#fff" stroke="#0a0a0a" stroke-width="1.300"/><path d="M3 9h2M6.500 9h4.500M3 12h2M6.500 12h4.500" stroke="#0a0a0a" stroke-width="1.300"/><rect x="5" y="3.300" width="3.300" height="2.600" fill="#0a0a0a"/><path d="M6.200 6.200L8 2.600 13.800 1.200 14.500 6 9.500 8.600z" fill="#f4ea2a" stroke="#8a8420" stroke-width="0.500"/><path d="M7 5l6-2M8 7l6-2.500" stroke="#c8bc10" stroke-width="0.600"/><rect x="14" y="1.200" width="2.700" height="5.300" fill="#00007a"/></svg>
<span class="t" style="left:229.00px;top:172.89px;font-size:11px;line-height:15px;color:#0c0c3c;letter-spacing:0.159px;">Властив...</span>
<div style="left:292px;top:168px;width:1px;height:24px;background:#5a9af0;"></div>
<div style="left:293px;top:168px;width:1px;height:24px;background:#dcebfd;"></div>
<svg style="left:321px;top:174px" width="16" height="13" viewBox="0 0 16 13"><rect x="0" y="0" width="16" height="13" fill="#0e8a7c"/><rect x="2" y="2" width="12" height="9" fill="#fff"/><circle cx="8" cy="4.500" r="1.900" fill="#0e8a7c"/><path d="M4.500 11q0.300-4.200 3.500-4.200t3.500 4.200z" fill="#0e8a7c"/></svg>
<span class="t" style="left:343.00px;top:172.89px;font-size:11px;line-height:15px;color:#0c0c3c;letter-spacing:0.215px;">Додати</span>
<svg style="left:407px;top:178px" width="8" height="4" viewBox="0 0 8 4"><path d="M0 0h8L4 4z" fill="#111"/></svg>
<svg style="left:429px;top:173px" width="14" height="14" viewBox="0 0 14 14"><path d="M1.300 1.300Q6 5.500 12.300 12.600M12 1Q7 6 1.500 12.500" stroke="#8a0a0a" stroke-width="1.900" stroke-linecap="round" fill="none"/></svg>
<span class="t" style="left:449.00px;top:172.89px;font-size:11px;line-height:15px;color:#0c0c3c;letter-spacing:0.034px;">Видалити</span>
<div style="left:511px;top:168px;width:1px;height:24px;background:#5a9af0;"></div>
<div style="left:512px;top:168px;width:1px;height:24px;background:#dcebfd;"></div>
<svg style="left:522px;top:171px" width="17" height="16" viewBox="0 0 17 16"><rect x="0.900" y="5.200" width="12" height="9.800" fill="#fff" stroke="#0a0a0a" stroke-width="1.300"/><path d="M3 9h2M6.500 9h4.500M3 12h2M6.500 12h4.500" stroke="#0a0a0a" stroke-width="1.300"/><rect x="5" y="3.300" width="3.300" height="2.600" fill="#0a0a0a"/><path d="M6.200 6.200L8 2.600 13.800 1.200 14.500 6 9.500 8.600z" fill="#f4ea2a" stroke="#8a8420" stroke-width="0.500"/><path d="M7 5l6-2M8 7l6-2.500" stroke="#c8bc10" stroke-width="0.600"/><rect x="14" y="1.200" width="2.700" height="5.300" fill="#00007a"/></svg>
<span class="t" style="left:543.00px;top:172.89px;font-size:11px;line-height:15px;color:#0c0c3c;letter-spacing:0.159px;">Властив...</span>
<div style="left:605px;top:168px;width:1px;height:24px;background:#5a9af0;"></div>
<div style="left:606px;top:168px;width:1px;height:24px;background:#dcebfd;"></div>
<svg style="left:615px;top:172px" width="18" height="17" viewBox="0 0 18 17"><path d="M1 1.500H12L7.800 6.500V10.500H5.200V6.500z" fill="#d8d8d8" stroke="#0a0a0a" stroke-width="1.200"/><path d="M3.500 2.600H9.500" stroke="#fff" stroke-width="1"/><path d="M2.500 12.700H6.300M7.300 12.700H11M12 12.700H16.200" stroke="#3a3a3a" stroke-width="1"/><path d="M2.500 14.800H6.300M7.300 14.800H11M12 14.800H16.200" stroke="#6a6a6a" stroke-width="1"/></svg>
<div style="left:639px;top:168px;width:1px;height:24px;background:#5a9af0;"></div>
<div style="left:640px;top:168px;width:1px;height:24px;background:#dcebfd;"></div>
<svg style="left:649px;top:171px" width="18" height="17" viewBox="0 0 18 17"><rect x="1.500" y="1.500" width="12.800" height="10.500" fill="#fff" stroke="#00007a" stroke-width="1"/><rect x="1" y="1" width="13.800" height="2.800" fill="#00007a"/><rect x="6" y="6" width="7" height="9" fill="#fff" stroke="#6a7a8a" stroke-width="0.900"/><path d="M7.500 8.500h1.500" stroke="#e02020" stroke-width="1"/><path d="M9.500 8.500h2.500M7.500 10.500h4.500M7.500 12.500h4.500" stroke="#3a6ad0" stroke-width="0.900"/><path d="M15.800 5.500V13" stroke="#00007a" stroke-width="1.300"/><path d="M13.800 12.300h4L15.800 15.500z" fill="#00007a"/></svg>
<div style="left:6px;top:196px;width:299px;height:619px;background:#fff;"></div>
<div style="left:82px;top:234px;width:144px;height:18px;background:#eeeeee;border-radius:2px;"></div>
<div style="left:10px;top:202px;width:9px;height:9px;border:1px solid #7d98bd;border-radius:2px;background:linear-gradient(#fff 0%,#fff 35%,#d6cbb8 100%);"></div>
<div style="left:12px;top:206px;width:5px;height:1px;background:#333;"></div>
<div style="left:20px;top:206px;width:7px;height:1px;background:repeating-linear-gradient(90deg,#8a8a8a 0 1px,transparent 1px 2px);"></div>
<div style="left:33px;top:214px;width:1px;height:7px;background:repeating-linear-gradient(180deg,#8a8a8a 0 1px,transparent 1px 2px);"></div>
<div style="left:28px;top:221px;width:9px;height:9px;border:1px solid #7d98bd;border-radius:2px;background:linear-gradient(#fff 0%,#fff 35%,#d6cbb8 100%);"></div>
<div style="left:30px;top:225px;width:5px;height:1px;background:#333;"></div>
<div style="left:38px;top:225px;width:7px;height:1px;background:repeating-linear-gradient(90deg,#8a8a8a 0 1px,transparent 1px 2px);"></div>
<div style="left:51px;top:233px;width:1px;height:68px;background:repeating-linear-gradient(180deg,#8a8a8a 0 1px,transparent 1px 2px);"></div>
<div style="left:52px;top:244px;width:8px;height:1px;background:repeating-linear-gradient(90deg,#8a8a8a 0 1px,transparent 1px 2px);"></div>
<div style="left:52px;top:263px;width:8px;height:1px;background:repeating-linear-gradient(90deg,#8a8a8a 0 1px,transparent 1px 2px);"></div>
<div style="left:52px;top:282px;width:8px;height:1px;background:repeating-linear-gradient(90deg,#8a8a8a 0 1px,transparent 1px 2px);"></div>
<div style="left:52px;top:301px;width:8px;height:1px;background:repeating-linear-gradient(90deg,#8a8a8a 0 1px,transparent 1px 2px);"></div>
<svg style="left:28px;top:197px" width="17" height="17" viewBox="0 0 17 17"><path d="M5.500 1H16V14.500L11.500 16.500V5z" fill="#0e8a80"/><path d="M0.800 2.300L9.500 1.500 11.200 5V14L8.500 13.500 5.500 10.500 0.800 10.200z" fill="#fff" stroke="#0e8a80" stroke-width="1.200"/><circle cx="5.500" cy="5" r="1.600" fill="#0e8a80"/><path d="M3.200 10.200q0-3.200 2.300-3.200t2.300 3.200z" fill="#0e8a80"/></svg>
<span class="t" style="left:50.00px;top:199.19px;font-size:11px;line-height:15px;color:#000;letter-spacing:-0.019px;">Места оказания услуг</span>
<svg style="left:46px;top:217px" width="16" height="15" viewBox="0 0 16 15"><rect x="5.500" y="2.600" width="9.500" height="7" fill="#d9d2cc" stroke="#0e8a80" stroke-width="1.100"/><rect x="3" y="4.300" width="9.500" height="7" fill="#d9d2cc" stroke="#0e8a80" stroke-width="1.100"/><rect x="0.600" y="6" width="11.400" height="7.600" fill="#d9d2cc" stroke="#0e8a80" stroke-width="1.200"/><circle cx="6.300" cy="8.500" r="1.500" fill="#0e8a80"/><path d="M3.800 13q0-3 2.500-3t2.500 3z" fill="#0e8a80"/></svg>
<span class="t" style="left:68.00px;top:218.19px;font-size:11px;line-height:15px;color:#000;transform:scaleX(0.8911);transform-origin:0 50%;">РЕСТОРАН</span>
<svg style="left:64px;top:238px" width="16" height="12" viewBox="0 0 16 12"><rect x="0.650" y="0.650" width="14.700" height="10.700" fill="#fff" stroke="#0e8a80" stroke-width="1.300"/><circle cx="5.200" cy="4" r="1.800" fill="#0e8a80"/><path d="M2.300 10q0-4 2.900-4t2.900 4z" fill="#0e8a80"/><circle cx="10.800" cy="4" r="1.800" fill="#0e8a80"/><path d="M7.900 10q0-4 2.900-4t2.900 4z" fill="#0e8a80"/></svg>
<span class="t" style="left:85.50px;top:237.19px;font-size:11px;line-height:15px;color:#000;transform:scaleX(0.8995);transform-origin:0 50%;">РЕСТОРАН - BURSA ROOMS</span>
<svg style="left:64px;top:257px" width="16" height="12" viewBox="0 0 16 12"><rect x="0.650" y="0.650" width="14.700" height="10.700" fill="#fff" stroke="#0e8a80" stroke-width="1.300"/><circle cx="5.200" cy="4" r="1.800" fill="#0e8a80"/><path d="M2.300 10q0-4 2.900-4t2.900 4z" fill="#0e8a80"/><circle cx="10.800" cy="4" r="1.800" fill="#0e8a80"/><path d="M7.900 10q0-4 2.900-4t2.900 4z" fill="#0e8a80"/></svg>
<span class="t" style="left:85.50px;top:256.19px;font-size:11px;line-height:15px;color:#000;transform:scaleX(0.9090);transform-origin:0 50%;">РЕСТОРАН - BAR</span>
<svg style="left:64px;top:276px" width="16" height="12" viewBox="0 0 16 12"><rect x="0.650" y="0.650" width="14.700" height="10.700" fill="#fff" stroke="#0e8a80" stroke-width="1.300"/><circle cx="5.200" cy="4" r="1.800" fill="#0e8a80"/><path d="M2.300 10q0-4 2.900-4t2.900 4z" fill="#0e8a80"/><circle cx="10.800" cy="4" r="1.800" fill="#0e8a80"/><path d="M7.900 10q0-4 2.900-4t2.900 4z" fill="#0e8a80"/></svg>
<span class="t" style="left:85.50px;top:275.19px;font-size:11px;line-height:15px;color:#000;transform:scaleX(0.9057);transform-origin:0 50%;">РЕСТОРАН - RESTAURANT</span>
<svg style="left:64px;top:295px" width="16" height="12" viewBox="0 0 16 12"><rect x="0.650" y="0.650" width="14.700" height="10.700" fill="#fff" stroke="#0e8a80" stroke-width="1.300"/><circle cx="5.200" cy="4" r="1.800" fill="#0e8a80"/><path d="M2.300 10q0-4 2.900-4t2.900 4z" fill="#0e8a80"/><circle cx="10.800" cy="4" r="1.800" fill="#0e8a80"/><path d="M7.900 10q0-4 2.900-4t2.900 4z" fill="#0e8a80"/></svg>
<span class="t" style="left:85.50px;top:294.19px;font-size:11px;line-height:15px;color:#000;transform:scaleX(0.9143);transform-origin:0 50%;">РЕСТОРАН - YARD</span>
<div style="left:311px;top:196px;width:921px;height:619px;background:#fff;"></div>
<div style="left:311px;top:196px;width:921px;height:21px;background:linear-gradient(#d7e7fc 0px,#d7e7fc 17px,#bcd6f8 21px);"></div>
<div style="left:610px;top:199px;width:1px;height:14px;background:#5a9af0;"></div>
<div style="left:611px;top:199px;width:1px;height:14px;background:#eef5ff;"></div>
<div style="left:790px;top:199px;width:1px;height:14px;background:#5a9af0;"></div>
<div style="left:791px;top:199px;width:1px;height:14px;background:#eef5ff;"></div>
<div style="left:880px;top:199px;width:1px;height:14px;background:#5a9af0;"></div>
<div style="left:881px;top:199px;width:1px;height:14px;background:#eef5ff;"></div>
<div style="left:969px;top:199px;width:1px;height:14px;background:#5a9af0;"></div>
<div style="left:970px;top:199px;width:1px;height:14px;background:#eef5ff;"></div>
<span class="t" style="left:317.00px;top:199.69px;font-size:11px;line-height:15px;color:#00007a;transform:scaleX(0.9548);transform-origin:0 50%;">Найменування</span>
<span class="t" style="left:617.00px;top:199.69px;font-size:11px;line-height:15px;color:#00007a;letter-spacing:0.006px;">Скорочення</span>
<span class="t" style="left:797.00px;top:199.69px;font-size:11px;line-height:15px;color:#00007a;letter-spacing:0.269px;">Використову...</span>
<span class="t" style="left:900.50px;top:199.69px;font-size:11px;line-height:15px;color:#00007a;letter-spacing:0.279px;">Порядок</span>
<div style="left:311px;top:217px;width:904px;height:21px;background:#f0f0f0;"></div>
<div style="left:311px;top:238px;width:659px;height:1px;background:repeating-linear-gradient(90deg,#8a8a8a 0 1px,transparent 1px 2px);"></div>
<svg style="left:317px;top:220px" width="13" height="16" viewBox="0 0 13 16" shape-rendering="crispEdges"><path d="M3 0h1v1h-1zM2 1h3v1h-3zM2 2h3v1h-3zM3 3h1v1h-1zM0 4h2v1h-2zM5 4h2v1h-2zM0 5h2v1h-2zM5 5h2v1h-2zM0 6h4v1h-4zM5 6h3v1h-3zM9 6h3v1h-3zM0 7h2v1h-2zM4 7h7v1h-7zM1 8h1v1h-1zM4 8h2v1h-2zM7 8h3v1h-3zM1 9h1v1h-1zM4 9h2v1h-2zM1 10h5v1h-5zM1 11h2v1h-2zM4 11h2v1h-2zM1 12h2v1h-2zM4 12h2v1h-2zM1 13h2v1h-2zM4 13h2v1h-2zM1 14h2v1h-2zM4 14h2v1h-2zM1 15h2v1h-2zM4 15h2v1h-2z" fill="#00007e"/><path d="M11 3h1v1h-1zM9 4h1v1h-1z" fill="#8c8c8c"/><path d="M11 5h1v1h-1z" fill="#4a4a5a"/><path d="M12 6h1v1h-1z" fill="#9a947a"/><path d="M2 7h2v1h-2zM2 8h2v1h-2zM2 9h2v1h-2z" fill="#ffffff"/></svg>
<span class="t" style="left:337.00px;top:221.19px;font-size:11px;line-height:15px;color:#000;letter-spacing:-0.177px;">201</span>
<span class="t" style="left:619.30px;top:221.19px;font-size:11px;line-height:15px;color:#000;letter-spacing:-0.177px;">201</span>
<span class="t" style="left:827.15px;top:221.19px;font-size:11px;line-height:15px;color:#000;letter-spacing:0.572px;">Так</span>
<span class="t" style="left:914.76px;top:221.19px;font-size:11px;line-height:15px;color:#000;transform:scaleX(0.9603);transform-origin:50% 50%;">1000</span>
<div style="left:311px;top:260px;width:659px;height:1px;background:repeating-linear-gradient(90deg,#8a8a8a 0 1px,transparent 1px 2px);"></div>
<svg style="left:317px;top:242px" width="13" height="16" viewBox="0 0 13 16" shape-rendering="crispEdges"><path d="M3 0h1v1h-1zM2 1h3v1h-3zM2 2h3v1h-3zM3 3h1v1h-1zM0 4h2v1h-2zM5 4h2v1h-2zM0 5h2v1h-2zM5 5h2v1h-2zM0 6h4v1h-4zM5 6h3v1h-3zM9 6h3v1h-3zM0 7h2v1h-2zM4 7h7v1h-7zM1 8h1v1h-1zM4 8h2v1h-2zM7 8h3v1h-3zM1 9h1v1h-1zM4 9h2v1h-2zM1 10h5v1h-5zM1 11h2v1h-2zM4 11h2v1h-2zM1 12h2v1h-2zM4 12h2v1h-2zM1 13h2v1h-2zM4 13h2v1h-2zM1 14h2v1h-2zM4 14h2v1h-2zM1 15h2v1h-2zM4 15h2v1h-2z" fill="#00007e"/><path d="M11 3h1v1h-1zM9 4h1v1h-1z" fill="#8c8c8c"/><path d="M11 5h1v1h-1z" fill="#4a4a5a"/><path d="M12 6h1v1h-1z" fill="#9a947a"/><path d="M2 7h2v1h-2zM2 8h2v1h-2zM2 9h2v1h-2z" fill="#ffffff"/></svg>
<span class="t" style="left:827.15px;top:243.19px;font-size:11px;line-height:15px;color:#000;letter-spacing:0.572px;">Так</span>
<span class="t" style="left:914.76px;top:243.19px;font-size:11px;line-height:15px;color:#000;transform:scaleX(0.9603);transform-origin:50% 50%;">1000</span>
<div style="left:311px;top:282px;width:659px;height:1px;background:repeating-linear-gradient(90deg,#8a8a8a 0 1px,transparent 1px 2px);"></div>
<svg style="left:317px;top:264px" width="13" height="16" viewBox="0 0 13 16" shape-rendering="crispEdges"><path d="M3 0h1v1h-1zM2 1h3v1h-3zM2 2h3v1h-3zM3 3h1v1h-1zM0 4h2v1h-2zM5 4h2v1h-2zM0 5h2v1h-2zM5 5h2v1h-2zM0 6h4v1h-4zM5 6h3v1h-3zM9 6h3v1h-3zM0 7h2v1h-2zM4 7h7v1h-7zM1 8h1v1h-1zM4 8h2v1h-2zM7 8h3v1h-3zM1 9h1v1h-1zM4 9h2v1h-2zM1 10h5v1h-5zM1 11h2v1h-2zM4 11h2v1h-2zM1 12h2v1h-2zM4 12h2v1h-2zM1 13h2v1h-2zM4 13h2v1h-2zM1 14h2v1h-2zM4 14h2v1h-2zM1 15h2v1h-2zM4 15h2v1h-2z" fill="#00007e"/><path d="M11 3h1v1h-1zM9 4h1v1h-1z" fill="#8c8c8c"/><path d="M11 5h1v1h-1z" fill="#4a4a5a"/><path d="M12 6h1v1h-1z" fill="#9a947a"/><path d="M2 7h2v1h-2zM2 8h2v1h-2zM2 9h2v1h-2z" fill="#ffffff"/></svg>
<span class="t" style="left:827.15px;top:265.19px;font-size:11px;line-height:15px;color:#000;letter-spacing:0.572px;">Так</span>
<span class="t" style="left:914.76px;top:265.19px;font-size:11px;line-height:15px;color:#000;transform:scaleX(0.9603);transform-origin:50% 50%;">1000</span>
<div style="left:311px;top:304px;width:659px;height:1px;background:repeating-linear-gradient(90deg,#8a8a8a 0 1px,transparent 1px 2px);"></div>
<svg style="left:317px;top:286px" width="13" height="16" viewBox="0 0 13 16" shape-rendering="crispEdges"><path d="M3 0h1v1h-1zM2 1h3v1h-3zM2 2h3v1h-3zM3 3h1v1h-1zM0 4h2v1h-2zM5 4h2v1h-2zM0 5h2v1h-2zM5 5h2v1h-2zM0 6h4v1h-4zM5 6h3v1h-3zM9 6h3v1h-3zM0 7h2v1h-2zM4 7h7v1h-7zM1 8h1v1h-1zM4 8h2v1h-2zM7 8h3v1h-3zM1 9h1v1h-1zM4 9h2v1h-2zM1 10h5v1h-5zM1 11h2v1h-2zM4 11h2v1h-2zM1 12h2v1h-2zM4 12h2v1h-2zM1 13h2v1h-2zM4 13h2v1h-2zM1 14h2v1h-2zM4 14h2v1h-2zM1 15h2v1h-2zM4 15h2v1h-2z" fill="#00007e"/><path d="M11 3h1v1h-1zM9 4h1v1h-1z" fill="#8c8c8c"/><path d="M11 5h1v1h-1z" fill="#4a4a5a"/><path d="M12 6h1v1h-1z" fill="#9a947a"/><path d="M2 7h2v1h-2zM2 8h2v1h-2zM2 9h2v1h-2z" fill="#ffffff"/></svg>
<span class="t" style="left:827.15px;top:287.19px;font-size:11px;line-height:15px;color:#000;letter-spacing:0.572px;">Так</span>
<span class="t" style="left:914.76px;top:287.19px;font-size:11px;line-height:15px;color:#000;transform:scaleX(0.9603);transform-origin:50% 50%;">1000</span>
<div style="left:311px;top:326px;width:659px;height:1px;background:repeating-linear-gradient(90deg,#8a8a8a 0 1px,transparent 1px 2px);"></div>
<svg style="left:317px;top:308px" width="13" height="16" viewBox="0 0 13 16" shape-rendering="crispEdges"><path d="M3 0h1v1h-1zM2 1h3v1h-3zM2 2h3v1h-3zM3 3h1v1h-1zM0 4h2v1h-2zM5 4h2v1h-2zM0 5h2v1h-2zM5 5h2v1h-2zM0 6h4v1h-4zM5 6h3v1h-3zM9 6h3v1h-3zM0 7h2v1h-2zM4 7h7v1h-7zM1 8h1v1h-1zM4 8h2v1h-2zM7 8h3v1h-3zM1 9h1v1h-1zM4 9h2v1h-2zM1 10h5v1h-5zM1 11h2v1h-2zM4 11h2v1h-2zM1 12h2v1h-2zM4 12h2v1h-2zM1 13h2v1h-2zM4 13h2v1h-2zM1 14h2v1h-2zM4 14h2v1h-2zM1 15h2v1h-2zM4 15h2v1h-2z" fill="#00007e"/><path d="M11 3h1v1h-1zM9 4h1v1h-1z" fill="#8c8c8c"/><path d="M11 5h1v1h-1z" fill="#4a4a5a"/><path d="M12 6h1v1h-1z" fill="#9a947a"/><path d="M2 7h2v1h-2zM2 8h2v1h-2zM2 9h2v1h-2z" fill="#ffffff"/></svg>
<span class="t" style="left:827.15px;top:309.19px;font-size:11px;line-height:15px;color:#000;letter-spacing:0.572px;">Так</span>
<span class="t" style="left:914.76px;top:309.19px;font-size:11px;line-height:15px;color:#000;transform:scaleX(0.9603);transform-origin:50% 50%;">1000</span>
<div style="left:311px;top:348px;width:659px;height:1px;background:repeating-linear-gradient(90deg,#8a8a8a 0 1px,transparent 1px 2px);"></div>
<svg style="left:317px;top:330px" width="13" height="16" viewBox="0 0 13 16" shape-rendering="crispEdges"><path d="M3 0h1v1h-1zM2 1h3v1h-3zM2 2h3v1h-3zM3 3h1v1h-1zM0 4h2v1h-2zM5 4h2v1h-2zM0 5h2v1h-2zM5 5h2v1h-2zM0 6h4v1h-4zM5 6h3v1h-3zM9 6h3v1h-3zM0 7h2v1h-2zM4 7h7v1h-7zM1 8h1v1h-1zM4 8h2v1h-2zM7 8h3v1h-3zM1 9h1v1h-1zM4 9h2v1h-2zM1 10h5v1h-5zM1 11h2v1h-2zM4 11h2v1h-2zM1 12h2v1h-2zM4 12h2v1h-2zM1 13h2v1h-2zM4 13h2v1h-2zM1 14h2v1h-2zM4 14h2v1h-2zM1 15h2v1h-2zM4 15h2v1h-2z" fill="#00007e"/><path d="M11 3h1v1h-1zM9 4h1v1h-1z" fill="#8c8c8c"/><path d="M11 5h1v1h-1z" fill="#4a4a5a"/><path d="M12 6h1v1h-1z" fill="#9a947a"/><path d="M2 7h2v1h-2zM2 8h2v1h-2zM2 9h2v1h-2z" fill="#ffffff"/></svg>
<span class="t" style="left:827.15px;top:331.19px;font-size:11px;line-height:15px;color:#000;letter-spacing:0.572px;">Так</span>
<span class="t" style="left:914.76px;top:331.19px;font-size:11px;line-height:15px;color:#000;transform:scaleX(0.9603);transform-origin:50% 50%;">1000</span>
<div style="left:311px;top:370px;width:659px;height:1px;background:repeating-linear-gradient(90deg,#8a8a8a 0 1px,transparent 1px 2px);"></div>
<svg style="left:317px;top:352px" width="13" height="16" viewBox="0 0 13 16" shape-rendering="crispEdges"><path d="M3 0h1v1h-1zM2 1h3v1h-3zM2 2h3v1h-3zM3 3h1v1h-1zM0 4h2v1h-2zM5 4h2v1h-2zM0 5h2v1h-2zM5 5h2v1h-2zM0 6h4v1h-4zM5 6h3v1h-3zM9 6h3v1h-3zM0 7h2v1h-2zM4 7h7v1h-7zM1 8h1v1h-1zM4 8h2v1h-2zM7 8h3v1h-3zM1 9h1v1h-1zM4 9h2v1h-2zM1 10h5v1h-5zM1 11h2v1h-2zM4 11h2v1h-2zM1 12h2v1h-2zM4 12h2v1h-2zM1 13h2v1h-2zM4 13h2v1h-2zM1 14h2v1h-2zM4 14h2v1h-2zM1 15h2v1h-2zM4 15h2v1h-2z" fill="#00007e"/><path d="M11 3h1v1h-1zM9 4h1v1h-1z" fill="#8c8c8c"/><path d="M11 5h1v1h-1z" fill="#4a4a5a"/><path d="M12 6h1v1h-1z" fill="#9a947a"/><path d="M2 7h2v1h-2zM2 8h2v1h-2zM2 9h2v1h-2z" fill="#ffffff"/></svg>
<span class="t" style="left:827.15px;top:353.19px;font-size:11px;line-height:15px;color:#000;letter-spacing:0.572px;">Так</span>
<span class="t" style="left:914.76px;top:353.19px;font-size:11px;line-height:15px;color:#000;transform:scaleX(0.9603);transform-origin:50% 50%;">1000</span>
<div style="left:311px;top:392px;width:659px;height:1px;background:repeating-linear-gradient(90deg,#8a8a8a 0 1px,transparent 1px 2px);"></div>
<svg style="left:317px;top:374px" width="13" height="16" viewBox="0 0 13 16" shape-rendering="crispEdges"><path d="M3 0h1v1h-1zM2 1h3v1h-3zM2 2h3v1h-3zM3 3h1v1h-1zM0 4h2v1h-2zM5 4h2v1h-2zM0 5h2v1h-2zM5 5h2v1h-2zM0 6h4v1h-4zM5 6h3v1h-3zM9 6h3v1h-3zM0 7h2v1h-2zM4 7h7v1h-7zM1 8h1v1h-1zM4 8h2v1h-2zM7 8h3v1h-3zM1 9h1v1h-1zM4 9h2v1h-2zM1 10h5v1h-5zM1 11h2v1h-2zM4 11h2v1h-2zM1 12h2v1h-2zM4 12h2v1h-2zM1 13h2v1h-2zM4 13h2v1h-2zM1 14h2v1h-2zM4 14h2v1h-2zM1 15h2v1h-2zM4 15h2v1h-2z" fill="#00007e"/><path d="M11 3h1v1h-1zM9 4h1v1h-1z" fill="#8c8c8c"/><path d="M11 5h1v1h-1z" fill="#4a4a5a"/><path d="M12 6h1v1h-1z" fill="#9a947a"/><path d="M2 7h2v1h-2zM2 8h2v1h-2zM2 9h2v1h-2z" fill="#ffffff"/></svg>
<span class="t" style="left:827.15px;top:375.19px;font-size:11px;line-height:15px;color:#000;letter-spacing:0.572px;">Так</span>
<span class="t" style="left:914.76px;top:375.19px;font-size:11px;line-height:15px;color:#000;transform:scaleX(0.9603);transform-origin:50% 50%;">1000</span>
<div style="left:311px;top:414px;width:659px;height:1px;background:repeating-linear-gradient(90deg,#8a8a8a 0 1px,transparent 1px 2px);"></div>
<svg style="left:317px;top:396px" width="13" height="16" viewBox="0 0 13 16" shape-rendering="crispEdges"><path d="M3 0h1v1h-1zM2 1h3v1h-3zM2 2h3v1h-3zM3 3h1v1h-1zM0 4h2v1h-2zM5 4h2v1h-2zM0 5h2v1h-2zM5 5h2v1h-2zM0 6h4v1h-4zM5 6h3v1h-3zM9 6h3v1h-3zM0 7h2v1h-2zM4 7h7v1h-7zM1 8h1v1h-1zM4 8h2v1h-2zM7 8h3v1h-3zM1 9h1v1h-1zM4 9h2v1h-2zM1 10h5v1h-5zM1 11h2v1h-2zM4 11h2v1h-2zM1 12h2v1h-2zM4 12h2v1h-2zM1 13h2v1h-2zM4 13h2v1h-2zM1 14h2v1h-2zM4 14h2v1h-2zM1 15h2v1h-2zM4 15h2v1h-2z" fill="#00007e"/><path d="M11 3h1v1h-1zM9 4h1v1h-1z" fill="#8c8c8c"/><path d="M11 5h1v1h-1z" fill="#4a4a5a"/><path d="M12 6h1v1h-1z" fill="#9a947a"/><path d="M2 7h2v1h-2zM2 8h2v1h-2zM2 9h2v1h-2z" fill="#ffffff"/></svg>
<span class="t" style="left:827.15px;top:397.19px;font-size:11px;line-height:15px;color:#000;letter-spacing:0.572px;">Так</span>
<span class="t" style="left:914.76px;top:397.19px;font-size:11px;line-height:15px;color:#000;transform:scaleX(0.9603);transform-origin:50% 50%;">1000</span>
<div style="left:311px;top:436px;width:659px;height:1px;background:repeating-linear-gradient(90deg,#8a8a8a 0 1px,transparent 1px 2px);"></div>
<svg style="left:317px;top:418px" width="13" height="16" viewBox="0 0 13 16" shape-rendering="crispEdges"><path d="M3 0h1v1h-1zM2 1h3v1h-3zM2 2h3v1h-3zM3 3h1v1h-1zM0 4h2v1h-2zM5 4h2v1h-2zM0 5h2v1h-2zM5 5h2v1h-2zM0 6h4v1h-4zM5 6h3v1h-3zM9 6h3v1h-3zM0 7h2v1h-2zM4 7h7v1h-7zM1 8h1v1h-1zM4 8h2v1h-2zM7 8h3v1h-3zM1 9h1v1h-1zM4 9h2v1h-2zM1 10h5v1h-5zM1 11h2v1h-2zM4 11h2v1h-2zM1 12h2v1h-2zM4 12h2v1h-2zM1 13h2v1h-2zM4 13h2v1h-2zM1 14h2v1h-2zM4 14h2v1h-2zM1 15h2v1h-2zM4 15h2v1h-2z" fill="#00007e"/><path d="M11 3h1v1h-1zM9 4h1v1h-1z" fill="#8c8c8c"/><path d="M11 5h1v1h-1z" fill="#4a4a5a"/><path d="M12 6h1v1h-1z" fill="#9a947a"/><path d="M2 7h2v1h-2zM2 8h2v1h-2zM2 9h2v1h-2z" fill="#ffffff"/></svg>
<span class="t" style="left:827.15px;top:419.19px;font-size:11px;line-height:15px;color:#000;letter-spacing:0.572px;">Так</span>
<span class="t" style="left:914.76px;top:419.19px;font-size:11px;line-height:15px;color:#000;transform:scaleX(0.9603);transform-origin:50% 50%;">1000</span>
<div style="left:311px;top:458px;width:659px;height:1px;background:repeating-linear-gradient(90deg,#8a8a8a 0 1px,transparent 1px 2px);"></div>
<svg style="left:317px;top:440px" width="13" height="16" viewBox="0 0 13 16" shape-rendering="crispEdges"><path d="M3 0h1v1h-1zM2 1h3v1h-3zM2 2h3v1h-3zM3 3h1v1h-1zM0 4h2v1h-2zM5 4h2v1h-2zM0 5h2v1h-2zM5 5h2v1h-2zM0 6h4v1h-4zM5 6h3v1h-3zM9 6h3v1h-3zM0 7h2v1h-2zM4 7h7v1h-7zM1 8h1v1h-1zM4 8h2v1h-2zM7 8h3v1h-3zM1 9h1v1h-1zM4 9h2v1h-2zM1 10h5v1h-5zM1 11h2v1h-2zM4 11h2v1h-2zM1 12h2v1h-2zM4 12h2v1h-2zM1 13h2v1h-2zM4 13h2v1h-2zM1 14h2v1h-2zM4 14h2v1h-2zM1 15h2v1h-2zM4 15h2v1h-2z" fill="#00007e"/><path d="M11 3h1v1h-1zM9 4h1v1h-1z" fill="#8c8c8c"/><path d="M11 5h1v1h-1z" fill="#4a4a5a"/><path d="M12 6h1v1h-1z" fill="#9a947a"/><path d="M2 7h2v1h-2zM2 8h2v1h-2zM2 9h2v1h-2z" fill="#ffffff"/></svg>
<span class="t" style="left:827.15px;top:441.19px;font-size:11px;line-height:15px;color:#000;letter-spacing:0.572px;">Так</span>
<span class="t" style="left:914.76px;top:441.19px;font-size:11px;line-height:15px;color:#000;transform:scaleX(0.9603);transform-origin:50% 50%;">1000</span>
<div style="left:311px;top:480px;width:659px;height:1px;background:repeating-linear-gradient(90deg,#8a8a8a 0 1px,transparent 1px 2px);"></div>
<svg style="left:317px;top:462px" width="13" height="16" viewBox="0 0 13 16" shape-rendering="crispEdges"><path d="M3 0h1v1h-1zM2 1h3v1h-3zM2 2h3v1h-3zM3 3h1v1h-1zM0 4h2v1h-2zM5 4h2v1h-2zM0 5h2v1h-2zM5 5h2v1h-2zM0 6h4v1h-4zM5 6h3v1h-3zM9 6h3v1h-3zM0 7h2v1h-2zM4 7h7v1h-7zM1 8h1v1h-1zM4 8h2v1h-2zM7 8h3v1h-3zM1 9h1v1h-1zM4 9h2v1h-2zM1 10h5v1h-5zM1 11h2v1h-2zM4 11h2v1h-2zM1 12h2v1h-2zM4 12h2v1h-2zM1 13h2v1h-2zM4 13h2v1h-2zM1 14h2v1h-2zM4 14h2v1h-2zM1 15h2v1h-2zM4 15h2v1h-2z" fill="#00007e"/><path d="M11 3h1v1h-1zM9 4h1v1h-1z" fill="#8c8c8c"/><path d="M11 5h1v1h-1z" fill="#4a4a5a"/><path d="M12 6h1v1h-1z" fill="#9a947a"/><path d="M2 7h2v1h-2zM2 8h2v1h-2zM2 9h2v1h-2z" fill="#ffffff"/></svg>
<span class="t" style="left:827.15px;top:463.19px;font-size:11px;line-height:15px;color:#000;letter-spacing:0.572px;">Так</span>
<span class="t" style="left:914.76px;top:463.19px;font-size:11px;line-height:15px;color:#000;transform:scaleX(0.9603);transform-origin:50% 50%;">1000</span>
<div style="left:311px;top:502px;width:659px;height:1px;background:repeating-linear-gradient(90deg,#8a8a8a 0 1px,transparent 1px 2px);"></div>
<svg style="left:317px;top:484px" width="13" height="16" viewBox="0 0 13 16" shape-rendering="crispEdges"><path d="M3 0h1v1h-1zM2 1h3v1h-3zM2 2h3v1h-3zM3 3h1v1h-1zM0 4h2v1h-2zM5 4h2v1h-2zM0 5h2v1h-2zM5 5h2v1h-2zM0 6h4v1h-4zM5 6h3v1h-3zM9 6h3v1h-3zM0 7h2v1h-2zM4 7h7v1h-7zM1 8h1v1h-1zM4 8h2v1h-2zM7 8h3v1h-3zM1 9h1v1h-1zM4 9h2v1h-2zM1 10h5v1h-5zM1 11h2v1h-2zM4 11h2v1h-2zM1 12h2v1h-2zM4 12h2v1h-2zM1 13h2v1h-2zM4 13h2v1h-2zM1 14h2v1h-2zM4 14h2v1h-2zM1 15h2v1h-2zM4 15h2v1h-2z" fill="#00007e"/><path d="M11 3h1v1h-1zM9 4h1v1h-1z" fill="#8c8c8c"/><path d="M11 5h1v1h-1z" fill="#4a4a5a"/><path d="M12 6h1v1h-1z" fill="#9a947a"/><path d="M2 7h2v1h-2zM2 8h2v1h-2zM2 9h2v1h-2z" fill="#ffffff"/></svg>
<span class="t" style="left:827.15px;top:485.19px;font-size:11px;line-height:15px;color:#000;letter-spacing:0.572px;">Так</span>
<span class="t" style="left:914.76px;top:485.19px;font-size:11px;line-height:15px;color:#000;transform:scaleX(0.9603);transform-origin:50% 50%;">1000</span>
<div style="left:311px;top:524px;width:659px;height:1px;background:repeating-linear-gradient(90deg,#8a8a8a 0 1px,transparent 1px 2px);"></div>
<svg style="left:317px;top:506px" width="13" height="16" viewBox="0 0 13 16" shape-rendering="crispEdges"><path d="M3 0h1v1h-1zM2 1h3v1h-3zM2 2h3v1h-3zM3 3h1v1h-1zM0 4h2v1h-2zM5 4h2v1h-2zM0 5h2v1h-2zM5 5h2v1h-2zM0 6h4v1h-4zM5 6h3v1h-3zM9 6h3v1h-3zM0 7h2v1h-2zM4 7h7v1h-7zM1 8h1v1h-1zM4 8h2v1h-2zM7 8h3v1h-3zM1 9h1v1h-1zM4 9h2v1h-2zM1 10h5v1h-5zM1 11h2v1h-2zM4 11h2v1h-2zM1 12h2v1h-2zM4 12h2v1h-2zM1 13h2v1h-2zM4 13h2v1h-2zM1 14h2v1h-2zM4 14h2v1h-2zM1 15h2v1h-2zM4 15h2v1h-2z" fill="#00007e"/><path d="M11 3h1v1h-1zM9 4h1v1h-1z" fill="#8c8c8c"/><path d="M11 5h1v1h-1z" fill="#4a4a5a"/><path d="M12 6h1v1h-1z" fill="#9a947a"/><path d="M2 7h2v1h-2zM2 8h2v1h-2zM2 9h2v1h-2z" fill="#ffffff"/></svg>
<span class="t" style="left:827.15px;top:507.19px;font-size:11px;line-height:15px;color:#000;letter-spacing:0.572px;">Так</span>
<span class="t" style="left:914.76px;top:507.19px;font-size:11px;line-height:15px;color:#000;transform:scaleX(0.9603);transform-origin:50% 50%;">1000</span>
<div style="left:311px;top:546px;width:659px;height:1px;background:repeating-linear-gradient(90deg,#8a8a8a 0 1px,transparent 1px 2px);"></div>
<svg style="left:317px;top:528px" width="13" height="16" viewBox="0 0 13 16" shape-rendering="crispEdges"><path d="M3 0h1v1h-1zM2 1h3v1h-3zM2 2h3v1h-3zM3 3h1v1h-1zM0 4h2v1h-2zM5 4h2v1h-2zM0 5h2v1h-2zM5 5h2v1h-2zM0 6h4v1h-4zM5 6h3v1h-3zM9 6h3v1h-3zM0 7h2v1h-2zM4 7h7v1h-7zM1 8h1v1h-1zM4 8h2v1h-2zM7 8h3v1h-3zM1 9h1v1h-1zM4 9h2v1h-2zM1 10h5v1h-5zM1 11h2v1h-2zM4 11h2v1h-2zM1 12h2v1h-2zM4 12h2v1h-2zM1 13h2v1h-2zM4 13h2v1h-2zM1 14h2v1h-2zM4 14h2v1h-2zM1 15h2v1h-2zM4 15h2v1h-2z" fill="#00007e"/><path d="M11 3h1v1h-1zM9 4h1v1h-1z" fill="#8c8c8c"/><path d="M11 5h1v1h-1z" fill="#4a4a5a"/><path d="M12 6h1v1h-1z" fill="#9a947a"/><path d="M2 7h2v1h-2zM2 8h2v1h-2zM2 9h2v1h-2z" fill="#ffffff"/></svg>
<span class="t" style="left:827.15px;top:529.19px;font-size:11px;line-height:15px;color:#000;letter-spacing:0.572px;">Так</span>
<span class="t" style="left:914.76px;top:529.19px;font-size:11px;line-height:15px;color:#000;transform:scaleX(0.9603);transform-origin:50% 50%;">1000</span>
<div style="left:311px;top:568px;width:659px;height:1px;background:repeating-linear-gradient(90deg,#8a8a8a 0 1px,transparent 1px 2px);"></div>
<svg style="left:317px;top:550px" width="13" height="16" viewBox="0 0 13 16" shape-rendering="crispEdges"><path d="M3 0h1v1h-1zM2 1h3v1h-3zM2 2h3v1h-3zM3 3h1v1h-1zM0 4h2v1h-2zM5 4h2v1h-2zM0 5h2v1h-2zM5 5h2v1h-2zM0 6h4v1h-4zM5 6h3v1h-3zM9 6h3v1h-3zM0 7h2v1h-2zM4 7h7v1h-7zM1 8h1v1h-1zM4 8h2v1h-2zM7 8h3v1h-3zM1 9h1v1h-1zM4 9h2v1h-2zM1 10h5v1h-5zM1 11h2v1h-2zM4 11h2v1h-2zM1 12h2v1h-2zM4 12h2v1h-2zM1 13h2v1h-2zM4 13h2v1h-2zM1 14h2v1h-2zM4 14h2v1h-2zM1 15h2v1h-2zM4 15h2v1h-2z" fill="#00007e"/><path d="M11 3h1v1h-1zM9 4h1v1h-1z" fill="#8c8c8c"/><path d="M11 5h1v1h-1z" fill="#4a4a5a"/><path d="M12 6h1v1h-1z" fill="#9a947a"/><path d="M2 7h2v1h-2zM2 8h2v1h-2zM2 9h2v1h-2z" fill="#ffffff"/></svg>
<span class="t" style="left:827.15px;top:551.19px;font-size:11px;line-height:15px;color:#000;letter-spacing:0.572px;">Так</span>
<span class="t" style="left:914.76px;top:551.19px;font-size:11px;line-height:15px;color:#000;transform:scaleX(0.9603);transform-origin:50% 50%;">1000</span>
<div style="left:311px;top:590px;width:659px;height:1px;background:repeating-linear-gradient(90deg,#8a8a8a 0 1px,transparent 1px 2px);"></div>
<svg style="left:317px;top:572px" width="13" height="16" viewBox="0 0 13 16" shape-rendering="crispEdges"><path d="M3 0h1v1h-1zM2 1h3v1h-3zM2 2h3v1h-3zM3 3h1v1h-1zM0 4h2v1h-2zM5 4h2v1h-2zM0 5h2v1h-2zM5 5h2v1h-2zM0 6h4v1h-4zM5 6h3v1h-3zM9 6h3v1h-3zM0 7h2v1h-2zM4 7h7v1h-7zM1 8h1v1h-1zM4 8h2v1h-2zM7 8h3v1h-3zM1 9h1v1h-1zM4 9h2v1h-2zM1 10h5v1h-5zM1 11h2v1h-2zM4 11h2v1h-2zM1 12h2v1h-2zM4 12h2v1h-2zM1 13h2v1h-2zM4 13h2v1h-2zM1 14h2v1h-2zM4 14h2v1h-2zM1 15h2v1h-2zM4 15h2v1h-2z" fill="#00007e"/><path d="M11 3h1v1h-1zM9 4h1v1h-1z" fill="#8c8c8c"/><path d="M11 5h1v1h-1z" fill="#4a4a5a"/><path d="M12 6h1v1h-1z" fill="#9a947a"/><path d="M2 7h2v1h-2zM2 8h2v1h-2zM2 9h2v1h-2z" fill="#ffffff"/></svg>
<span class="t" style="left:827.15px;top:573.19px;font-size:11px;line-height:15px;color:#000;letter-spacing:0.572px;">Так</span>
<span class="t" style="left:914.76px;top:573.19px;font-size:11px;line-height:15px;color:#000;transform:scaleX(0.9603);transform-origin:50% 50%;">1000</span>
<div style="left:311px;top:612px;width:659px;height:1px;background:repeating-linear-gradient(90deg,#8a8a8a 0 1px,transparent 1px 2px);"></div>
<svg style="left:317px;top:594px" width="13" height="16" viewBox="0 0 13 16" shape-rendering="crispEdges"><path d="M3 0h1v1h-1zM2 1h3v1h-3zM2 2h3v1h-3zM3 3h1v1h-1zM0 4h2v1h-2zM5 4h2v1h-2zM0 5h2v1h-2zM5 5h2v1h-2zM0 6h4v1h-4zM5 6h3v1h-3zM9 6h3v1h-3zM0 7h2v1h-2zM4 7h7v1h-7zM1 8h1v1h-1zM4 8h2v1h-2zM7 8h3v1h-3zM1 9h1v1h-1zM4 9h2v1h-2zM1 10h5v1h-5zM1 11h2v1h-2zM4 11h2v1h-2zM1 12h2v1h-2zM4 12h2v1h-2zM1 13h2v1h-2zM4 13h2v1h-2zM1 14h2v1h-2zM4 14h2v1h-2zM1 15h2v1h-2zM4 15h2v1h-2z" fill="#00007e"/><path d="M11 3h1v1h-1zM9 4h1v1h-1z" fill="#8c8c8c"/><path d="M11 5h1v1h-1z" fill="#4a4a5a"/><path d="M12 6h1v1h-1z" fill="#9a947a"/><path d="M2 7h2v1h-2zM2 8h2v1h-2zM2 9h2v1h-2z" fill="#ffffff"/></svg>
<span class="t" style="left:827.15px;top:595.19px;font-size:11px;line-height:15px;color:#000;letter-spacing:0.572px;">Так</span>
<span class="t" style="left:914.76px;top:595.19px;font-size:11px;line-height:15px;color:#000;transform:scaleX(0.9603);transform-origin:50% 50%;">1000</span>
<div style="left:311px;top:634px;width:659px;height:1px;background:repeating-linear-gradient(90deg,#8a8a8a 0 1px,transparent 1px 2px);"></div>
<svg style="left:317px;top:616px" width="13" height="16" viewBox="0 0 13 16" shape-rendering="crispEdges"><path d="M3 0h1v1h-1zM2 1h3v1h-3zM2 2h3v1h-3zM3 3h1v1h-1zM0 4h2v1h-2zM5 4h2v1h-2zM0 5h2v1h-2zM5 5h2v1h-2zM0 6h4v1h-4zM5 6h3v1h-3zM9 6h3v1h-3zM0 7h2v1h-2zM4 7h7v1h-7zM1 8h1v1h-1zM4 8h2v1h-2zM7 8h3v1h-3zM1 9h1v1h-1zM4 9h2v1h-2zM1 10h5v1h-5zM1 11h2v1h-2zM4 11h2v1h-2zM1 12h2v1h-2zM4 12h2v1h-2zM1 13h2v1h-2zM4 13h2v1h-2zM1 14h2v1h-2zM4 14h2v1h-2zM1 15h2v1h-2zM4 15h2v1h-2z" fill="#00007e"/><path d="M11 3h1v1h-1zM9 4h1v1h-1z" fill="#8c8c8c"/><path d="M11 5h1v1h-1z" fill="#4a4a5a"/><path d="M12 6h1v1h-1z" fill="#9a947a"/><path d="M2 7h2v1h-2zM2 8h2v1h-2zM2 9h2v1h-2z" fill="#ffffff"/></svg>
<span class="t" style="left:827.15px;top:617.19px;font-size:11px;line-height:15px;color:#000;letter-spacing:0.572px;">Так</span>
<span class="t" style="left:914.76px;top:617.19px;font-size:11px;line-height:15px;color:#000;transform:scaleX(0.9603);transform-origin:50% 50%;">1000</span>
<div style="left:311px;top:656px;width:659px;height:1px;background:repeating-linear-gradient(90deg,#8a8a8a 0 1px,transparent 1px 2px);"></div>
<svg style="left:317px;top:638px" width="13" height="16" viewBox="0 0 13 16" shape-rendering="crispEdges"><path d="M3 0h1v1h-1zM2 1h3v1h-3zM2 2h3v1h-3zM3 3h1v1h-1zM0 4h2v1h-2zM5 4h2v1h-2zM0 5h2v1h-2zM5 5h2v1h-2zM0 6h4v1h-4zM5 6h3v1h-3zM9 6h3v1h-3zM0 7h2v1h-2zM4 7h7v1h-7zM1 8h1v1h-1zM4 8h2v1h-2zM7 8h3v1h-3zM1 9h1v1h-1zM4 9h2v1h-2zM1 10h5v1h-5zM1 11h2v1h-2zM4 11h2v1h-2zM1 12h2v1h-2zM4 12h2v1h-2zM1 13h2v1h-2zM4 13h2v1h-2zM1 14h2v1h-2zM4 14h2v1h-2zM1 15h2v1h-2zM4 15h2v1h-2z" fill="#00007e"/><path d="M11 3h1v1h-1zM9 4h1v1h-1z" fill="#8c8c8c"/><path d="M11 5h1v1h-1z" fill="#4a4a5a"/><path d="M12 6h1v1h-1z" fill="#9a947a"/><path d="M2 7h2v1h-2zM2 8h2v1h-2zM2 9h2v1h-2z" fill="#ffffff"/></svg>
<span class="t" style="left:827.15px;top:639.19px;font-size:11px;line-height:15px;color:#000;letter-spacing:0.572px;">Так</span>
<span class="t" style="left:914.76px;top:639.19px;font-size:11px;line-height:15px;color:#000;transform:scaleX(0.9603);transform-origin:50% 50%;">1000</span>
<div style="left:311px;top:678px;width:659px;height:1px;background:repeating-linear-gradient(90deg,#8a8a8a 0 1px,transparent 1px 2px);"></div>
<svg style="left:317px;top:660px" width="13" height="16" viewBox="0 0 13 16" shape-rendering="crispEdges"><path d="M3 0h1v1h-1zM2 1h3v1h-3zM2 2h3v1h-3zM3 3h1v1h-1zM0 4h2v1h-2zM5 4h2v1h-2zM0 5h2v1h-2zM5 5h2v1h-2zM0 6h4v1h-4zM5 6h3v1h-3zM9 6h3v1h-3zM0 7h2v1h-2zM4 7h7v1h-7zM1 8h1v1h-1zM4 8h2v1h-2zM7 8h3v1h-3zM1 9h1v1h-1zM4 9h2v1h-2zM1 10h5v1h-5zM1 11h2v1h-2zM4 11h2v1h-2zM1 12h2v1h-2zM4 12h2v1h-2zM1 13h2v1h-2zM4 13h2v1h-2zM1 14h2v1h-2zM4 14h2v1h-2zM1 15h2v1h-2zM4 15h2v1h-2z" fill="#00007e"/><path d="M11 3h1v1h-1zM9 4h1v1h-1z" fill="#8c8c8c"/><path d="M11 5h1v1h-1z" fill="#4a4a5a"/><path d="M12 6h1v1h-1z" fill="#9a947a"/><path d="M2 7h2v1h-2zM2 8h2v1h-2zM2 9h2v1h-2z" fill="#ffffff"/></svg>
<span class="t" style="left:827.15px;top:661.19px;font-size:11px;line-height:15px;color:#000;letter-spacing:0.572px;">Так</span>
<span class="t" style="left:914.76px;top:661.19px;font-size:11px;line-height:15px;color:#000;transform:scaleX(0.9603);transform-origin:50% 50%;">1000</span>
<div style="left:311px;top:700px;width:659px;height:1px;background:repeating-linear-gradient(90deg,#8a8a8a 0 1px,transparent 1px 2px);"></div>
<svg style="left:317px;top:682px" width="13" height="16" viewBox="0 0 13 16" shape-rendering="crispEdges"><path d="M3 0h1v1h-1zM2 1h3v1h-3zM2 2h3v1h-3zM3 3h1v1h-1zM0 4h2v1h-2zM5 4h2v1h-2zM0 5h2v1h-2zM5 5h2v1h-2zM0 6h4v1h-4zM5 6h3v1h-3zM9 6h3v1h-3zM0 7h2v1h-2zM4 7h7v1h-7zM1 8h1v1h-1zM4 8h2v1h-2zM7 8h3v1h-3zM1 9h1v1h-1zM4 9h2v1h-2zM1 10h5v1h-5zM1 11h2v1h-2zM4 11h2v1h-2zM1 12h2v1h-2zM4 12h2v1h-2zM1 13h2v1h-2zM4 13h2v1h-2zM1 14h2v1h-2zM4 14h2v1h-2zM1 15h2v1h-2zM4 15h2v1h-2z" fill="#00007e"/><path d="M11 3h1v1h-1zM9 4h1v1h-1z" fill="#8c8c8c"/><path d="M11 5h1v1h-1z" fill="#4a4a5a"/><path d="M12 6h1v1h-1z" fill="#9a947a"/><path d="M2 7h2v1h-2zM2 8h2v1h-2zM2 9h2v1h-2z" fill="#ffffff"/></svg>
<span class="t" style="left:827.15px;top:683.19px;font-size:11px;line-height:15px;color:#000;letter-spacing:0.572px;">Так</span>
<span class="t" style="left:914.76px;top:683.19px;font-size:11px;line-height:15px;color:#000;transform:scaleX(0.9603);transform-origin:50% 50%;">1000</span>
<div style="left:311px;top:722px;width:659px;height:1px;background:repeating-linear-gradient(90deg,#8a8a8a 0 1px,transparent 1px 2px);"></div>
<svg style="left:317px;top:704px" width="13" height="16" viewBox="0 0 13 16" shape-rendering="crispEdges"><path d="M3 0h1v1h-1zM2 1h3v1h-3zM2 2h3v1h-3zM3 3h1v1h-1zM0 4h2v1h-2zM5 4h2v1h-2zM0 5h2v1h-2zM5 5h2v1h-2zM0 6h4v1h-4zM5 6h3v1h-3zM9 6h3v1h-3zM0 7h2v1h-2zM4 7h7v1h-7zM1 8h1v1h-1zM4 8h2v1h-2zM7 8h3v1h-3zM1 9h1v1h-1zM4 9h2v1h-2zM1 10h5v1h-5zM1 11h2v1h-2zM4 11h2v1h-2zM1 12h2v1h-2zM4 12h2v1h-2zM1 13h2v1h-2zM4 13h2v1h-2zM1 14h2v1h-2zM4 14h2v1h-2zM1 15h2v1h-2zM4 15h2v1h-2z" fill="#00007e"/><path d="M11 3h1v1h-1zM9 4h1v1h-1z" fill="#8c8c8c"/><path d="M11 5h1v1h-1z" fill="#4a4a5a"/><path d="M12 6h1v1h-1z" fill="#9a947a"/><path d="M2 7h2v1h-2zM2 8h2v1h-2zM2 9h2v1h-2z" fill="#ffffff"/></svg>
<span class="t" style="left:337.00px;top:705.19px;font-size:11px;line-height:15px;color:#000;letter-spacing:-0.177px;">401</span>
<span class="t" style="left:619.30px;top:705.19px;font-size:11px;line-height:15px;color:#000;letter-spacing:-0.177px;">401</span>
<span class="t" style="left:827.15px;top:705.19px;font-size:11px;line-height:15px;color:#000;letter-spacing:0.572px;">Так</span>
<span class="t" style="left:914.76px;top:705.19px;font-size:11px;line-height:15px;color:#000;transform:scaleX(0.9603);transform-origin:50% 50%;">1000</span>
<div style="left:311px;top:744px;width:659px;height:1px;background:repeating-linear-gradient(90deg,#8a8a8a 0 1px,transparent 1px 2px);"></div>
<svg style="left:317px;top:726px" width="13" height="16" viewBox="0 0 13 16" shape-rendering="crispEdges"><path d="M3 0h1v1h-1zM2 1h3v1h-3zM2 2h3v1h-3zM3 3h1v1h-1zM0 4h2v1h-2zM5 4h2v1h-2zM0 5h2v1h-2zM5 5h2v1h-2zM0 6h4v1h-4zM5 6h3v1h-3zM9 6h3v1h-3zM0 7h2v1h-2zM4 7h7v1h-7zM1 8h1v1h-1zM4 8h2v1h-2zM7 8h3v1h-3zM1 9h1v1h-1zM4 9h2v1h-2zM1 10h5v1h-5zM1 11h2v1h-2zM4 11h2v1h-2zM1 12h2v1h-2zM4 12h2v1h-2zM1 13h2v1h-2zM4 13h2v1h-2zM1 14h2v1h-2zM4 14h2v1h-2zM1 15h2v1h-2zM4 15h2v1h-2z" fill="#00007e"/><path d="M11 3h1v1h-1zM9 4h1v1h-1z" fill="#8c8c8c"/><path d="M11 5h1v1h-1z" fill="#4a4a5a"/><path d="M12 6h1v1h-1z" fill="#9a947a"/><path d="M2 7h2v1h-2zM2 8h2v1h-2zM2 9h2v1h-2z" fill="#ffffff"/></svg>
<span class="t" style="left:337.00px;top:727.19px;font-size:11px;line-height:15px;color:#000;letter-spacing:-0.177px;">402</span>
<span class="t" style="left:619.30px;top:727.19px;font-size:11px;line-height:15px;color:#000;letter-spacing:-0.177px;">402</span>
<span class="t" style="left:827.15px;top:727.19px;font-size:11px;line-height:15px;color:#000;letter-spacing:0.572px;">Так</span>
<span class="t" style="left:914.76px;top:727.19px;font-size:11px;line-height:15px;color:#000;transform:scaleX(0.9603);transform-origin:50% 50%;">1000</span>
<div style="left:311px;top:766px;width:659px;height:1px;background:repeating-linear-gradient(90deg,#8a8a8a 0 1px,transparent 1px 2px);"></div>
<svg style="left:317px;top:748px" width="13" height="16" viewBox="0 0 13 16" shape-rendering="crispEdges"><path d="M3 0h1v1h-1zM2 1h3v1h-3zM2 2h3v1h-3zM3 3h1v1h-1zM0 4h2v1h-2zM5 4h2v1h-2zM0 5h2v1h-2zM5 5h2v1h-2zM0 6h4v1h-4zM5 6h3v1h-3zM9 6h3v1h-3zM0 7h2v1h-2zM4 7h7v1h-7zM1 8h1v1h-1zM4 8h2v1h-2zM7 8h3v1h-3zM1 9h1v1h-1zM4 9h2v1h-2zM1 10h5v1h-5zM1 11h2v1h-2zM4 11h2v1h-2zM1 12h2v1h-2zM4 12h2v1h-2zM1 13h2v1h-2zM4 13h2v1h-2zM1 14h2v1h-2zM4 14h2v1h-2zM1 15h2v1h-2zM4 15h2v1h-2z" fill="#00007e"/><path d="M11 3h1v1h-1zM9 4h1v1h-1z" fill="#8c8c8c"/><path d="M11 5h1v1h-1z" fill="#4a4a5a"/><path d="M12 6h1v1h-1z" fill="#9a947a"/><path d="M2 7h2v1h-2zM2 8h2v1h-2zM2 9h2v1h-2z" fill="#ffffff"/></svg>
<span class="t" style="left:337.00px;top:749.19px;font-size:11px;line-height:15px;color:#000;letter-spacing:-0.177px;">403</span>
<span class="t" style="left:619.30px;top:749.19px;font-size:11px;line-height:15px;color:#000;letter-spacing:-0.177px;">403</span>
<span class="t" style="left:827.15px;top:749.19px;font-size:11px;line-height:15px;color:#000;letter-spacing:0.572px;">Так</span>
<span class="t" style="left:914.76px;top:749.19px;font-size:11px;line-height:15px;color:#000;transform:scaleX(0.9603);transform-origin:50% 50%;">1000</span>
<div style="left:311px;top:788px;width:659px;height:1px;background:repeating-linear-gradient(90deg,#8a8a8a 0 1px,transparent 1px 2px);"></div>
<svg style="left:317px;top:770px" width="13" height="16" viewBox="0 0 13 16" shape-rendering="crispEdges"><path d="M3 0h1v1h-1zM2 1h3v1h-3zM2 2h3v1h-3zM3 3h1v1h-1zM0 4h2v1h-2zM5 4h2v1h-2zM0 5h2v1h-2zM5 5h2v1h-2zM0 6h4v1h-4zM5 6h3v1h-3zM9 6h3v1h-3zM0 7h2v1h-2zM4 7h7v1h-7zM1 8h1v1h-1zM4 8h2v1h-2zM7 8h3v1h-3zM1 9h1v1h-1zM4 9h2v1h-2zM1 10h5v1h-5zM1 11h2v1h-2zM4 11h2v1h-2zM1 12h2v1h-2zM4 12h2v1h-2zM1 13h2v1h-2zM4 13h2v1h-2zM1 14h2v1h-2zM4 14h2v1h-2zM1 15h2v1h-2zM4 15h2v1h-2z" fill="#00007e"/><path d="M11 3h1v1h-1zM9 4h1v1h-1z" fill="#8c8c8c"/><path d="M11 5h1v1h-1z" fill="#4a4a5a"/><path d="M12 6h1v1h-1z" fill="#9a947a"/><path d="M2 7h2v1h-2zM2 8h2v1h-2zM2 9h2v1h-2z" fill="#ffffff"/></svg>
<span class="t" style="left:337.00px;top:771.19px;font-size:11px;line-height:15px;color:#000;letter-spacing:-0.177px;">404</span>
<span class="t" style="left:619.30px;top:771.19px;font-size:11px;line-height:15px;color:#000;letter-spacing:-0.177px;">404</span>
<span class="t" style="left:827.15px;top:771.19px;font-size:11px;line-height:15px;color:#000;letter-spacing:0.572px;">Так</span>
<span class="t" style="left:914.76px;top:771.19px;font-size:11px;line-height:15px;color:#000;transform:scaleX(0.9603);transform-origin:50% 50%;">1000</span>
<div style="left:311px;top:810px;width:659px;height:1px;background:repeating-linear-gradient(90deg,#8a8a8a 0 1px,transparent 1px 2px);"></div>
<svg style="left:317px;top:792px" width="13" height="16" viewBox="0 0 13 16" shape-rendering="crispEdges"><path d="M3 0h1v1h-1zM2 1h3v1h-3zM2 2h3v1h-3zM3 3h1v1h-1zM0 4h2v1h-2zM5 4h2v1h-2zM0 5h2v1h-2zM5 5h2v1h-2zM0 6h4v1h-4zM5 6h3v1h-3zM9 6h3v1h-3zM0 7h2v1h-2zM4 7h7v1h-7zM1 8h1v1h-1zM4 8h2v1h-2zM7 8h3v1h-3zM1 9h1v1h-1zM4 9h2v1h-2zM1 10h5v1h-5zM1 11h2v1h-2zM4 11h2v1h-2zM1 12h2v1h-2zM4 12h2v1h-2zM1 13h2v1h-2zM4 13h2v1h-2zM1 14h2v1h-2zM4 14h2v1h-2zM1 15h2v1h-2zM4 15h2v1h-2z" fill="#00007e"/><path d="M11 3h1v1h-1zM9 4h1v1h-1z" fill="#8c8c8c"/><path d="M11 5h1v1h-1z" fill="#4a4a5a"/><path d="M12 6h1v1h-1z" fill="#9a947a"/><path d="M2 7h2v1h-2zM2 8h2v1h-2zM2 9h2v1h-2z" fill="#ffffff"/></svg>
<span class="t" style="left:337.00px;top:793.19px;font-size:11px;line-height:15px;color:#000;letter-spacing:-0.177px;">405</span>
<span class="t" style="left:619.30px;top:793.19px;font-size:11px;line-height:15px;color:#000;letter-spacing:-0.177px;">405</span>
<span class="t" style="left:827.15px;top:793.19px;font-size:11px;line-height:15px;color:#000;letter-spacing:0.572px;">Так</span>
<span class="t" style="left:914.76px;top:793.19px;font-size:11px;line-height:15px;color:#000;transform:scaleX(0.9603);transform-origin:50% 50%;">1000</span>
<div style="left:610px;top:217px;width:1px;height:598px;background:repeating-linear-gradient(180deg,#8a8a8a 0 1px,transparent 1px 2px);"></div>
<div style="left:790px;top:217px;width:1px;height:598px;background:repeating-linear-gradient(180deg,#8a8a8a 0 1px,transparent 1px 2px);"></div>
<div style="left:880px;top:217px;width:1px;height:598px;background:repeating-linear-gradient(180deg,#8a8a8a 0 1px,transparent 1px 2px);"></div>
<div style="left:970px;top:217px;width:1px;height:598px;background:repeating-linear-gradient(180deg,#8a8a8a 0 1px,transparent 1px 2px);"></div>
<div style="left:1215px;top:217px;width:17px;height:598px;background:#f0f0f0;"></div>
<div style="left:1216px;top:234px;width:15px;height:233px;background:#cdcdcd;"></div>
<svg style="left:1219px;top:222px" width="9" height="7" viewBox="0 0 9 7"><path d="M0.700 5.800L4.500 2l3.800 3.800" stroke="#505050" stroke-width="1.800" fill="none"/></svg>
<svg style="left:1219px;top:803px" width="9" height="7" viewBox="0 0 9 7"><path d="M0.700 1.200L4.500 5l3.800-3.800" stroke="#505050" stroke-width="1.800" fill="none"/></svg>
<div style="left:6px;top:815px;width:1226px;height:24px;background:linear-gradient(#d9e8fc 0px,#c9defa 6px,#a7c8f5 14px,#b6d3f8 24px);border:1px solid #4a96f5;box-shadow:inset 1px 1px 0 #eef5ff;"></div>
<div style="left:176px;top:818px;width:1px;height:20px;background:#7fa9e6;"></div>
<div style="left:177px;top:818px;width:1px;height:20px;background:#eef5fe;"></div>
<div style="left:310px;top:818px;width:1px;height:20px;background:#7fa9e6;"></div>
<div style="left:311px;top:818px;width:1px;height:20px;background:#eef5fe;"></div>
<div style="left:710px;top:818px;width:1px;height:20px;background:#7fa9e6;"></div>
<div style="left:711px;top:818px;width:1px;height:20px;background:#eef5fe;"></div>
<span class="t" style="left:12.50px;top:820.99px;font-size:11px;line-height:15px;color:#2060c0;letter-spacing:0.127px;">Кількість об'єктів: 66</span>
<span class="t" style="left:191.00px;top:820.99px;font-size:11px;line-height:15px;color:#c0141e;letter-spacing:0.012px;">Неактивні приховані</span>
<div style="left:6px;top:839px;width:1228px;height:2px;background:#fff;"></div>
<div style="left:4px;top:841px;width:1230px;height:29px;background:linear-gradient(#23414f 0px,#23414f 1px,#6f8d99 2px,#4b6d7d 15px,#153a52 15px,#0e2e44 28px,#050f18 29px);"></div>
<div style="left:4px;top:870px;width:1230px;height:2px;background:#d4d4d4;"></div>
<div style="left:0px;top:858px;width:4px;height:14px;background:#2f50c6;"></div>
<div style="left:4px;top:870px;width:16px;height:2px;background:#5a7ed0;"></div>
<div style="left:24px;top:843px;width:158px;height:26px;background:linear-gradient(#1f3d4d 0px,#10283a 12px,#03101a 13px,#020a12 26px);border:1px solid #56788a;border-radius:5px;"></div>
<span class="t" style="left:37.00px;top:849.69px;font-size:11px;line-height:15px;color:#fff;letter-spacing:-0.148px;">Місця надання послуг</span>
<svg style="left:11px;top:847px" width="9" height="24"><rect x="0" y="0" width="1" height="1" fill="#a9c0cc"/><rect x="1" y="1" width="1" height="1" fill="#0a2030"/><rect x="3" y="0" width="1" height="1" fill="#a9c0cc"/><rect x="4" y="1" width="1" height="1" fill="#0a2030"/><rect x="6" y="0" width="1" height="1" fill="#a9c0cc"/><rect x="7" y="1" width="1" height="1" fill="#0a2030"/><rect x="0" y="4" width="1" height="1" fill="#a9c0cc"/><rect x="1" y="5" width="1" height="1" fill="#0a2030"/><rect x="3" y="4" width="1" height="1" fill="#a9c0cc"/><rect x="4" y="5" width="1" height="1" fill="#0a2030"/><rect x="6" y="4" width="1" height="1" fill="#a9c0cc"/><rect x="7" y="5" width="1" height="1" fill="#0a2030"/><rect x="0" y="8" width="1" height="1" fill="#a9c0cc"/><rect x="1" y="9" width="1" height="1" fill="#0a2030"/><rect x="3" y="8" width="1" height="1" fill="#a9c0cc"/><rect x="4" y="9" width="1" height="1" fill="#0a2030"/><rect x="6" y="8" width="1" height="1" fill="#a9c0cc"/><rect x="7" y="9" width="1" height="1" fill="#0a2030"/><rect x="0" y="12" width="1" height="1" fill="#a9c0cc"/><rect x="1" y="13" width="1" height="1" fill="#0a2030"/><rect x="3" y="12" width="1" height="1" fill="#a9c0cc"/><rect x="4" y="13" width="1" height="1" fill="#0a2030"/><rect x="6" y="12" width="1" height="1" fill="#a9c0cc"/><rect x="7" y="13" width="1" height="1" fill="#0a2030"/><rect x="0" y="16" width="1" height="1" fill="#a9c0cc"/><rect x="1" y="17" width="1" height="1" fill="#0a2030"/><rect x="3" y="16" width="1" height="1" fill="#a9c0cc"/><rect x="4" y="17" width="1" height="1" fill="#0a2030"/><rect x="6" y="16" width="1" height="1" fill="#a9c0cc"/><rect x="7" y="17" width="1" height="1" fill="#0a2030"/><rect x="0" y="20" width="1" height="1" fill="#a9c0cc"/><rect x="1" y="21" width="1" height="1" fill="#0a2030"/><rect x="3" y="20" width="1" height="1" fill="#a9c0cc"/><rect x="4" y="21" width="1" height="1" fill="#0a2030"/><rect x="6" y="20" width="1" height="1" fill="#a9c0cc"/><rect x="7" y="21" width="1" height="1" fill="#0a2030"/></svg>
<svg style="left:1026px;top:846px" width="9" height="24"><rect x="0" y="0" width="1" height="1" fill="#a9c0cc"/><rect x="1" y="1" width="1" height="1" fill="#0a2030"/><rect x="3" y="0" width="1" height="1" fill="#a9c0cc"/><rect x="4" y="1" width="1" height="1" fill="#0a2030"/><rect x="6" y="0" width="1" height="1" fill="#a9c0cc"/><rect x="7" y="1" width="1" height="1" fill="#0a2030"/><rect x="0" y="4" width="1" height="1" fill="#a9c0cc"/><rect x="1" y="5" width="1" height="1" fill="#0a2030"/><rect x="3" y="4" width="1" height="1" fill="#a9c0cc"/><rect x="4" y="5" width="1" height="1" fill="#0a2030"/><rect x="6" y="4" width="1" height="1" fill="#a9c0cc"/><rect x="7" y="5" width="1" height="1" fill="#0a2030"/><rect x="0" y="8" width="1" height="1" fill="#a9c0cc"/><rect x="1" y="9" width="1" height="1" fill="#0a2030"/><rect x="3" y="8" width="1" height="1" fill="#a9c0cc"/><rect x="4" y="9" width="1" height="1" fill="#0a2030"/><rect x="6" y="8" width="1" height="1" fill="#a9c0cc"/><rect x="7" y="9" width="1" height="1" fill="#0a2030"/><rect x="0" y="12" width="1" height="1" fill="#a9c0cc"/><rect x="1" y="13" width="1" height="1" fill="#0a2030"/><rect x="3" y="12" width="1" height="1" fill="#a9c0cc"/><rect x="4" y="13" width="1" height="1" fill="#0a2030"/><rect x="6" y="12" width="1" height="1" fill="#a9c0cc"/><rect x="7" y="13" width="1" height="1" fill="#0a2030"/><rect x="0" y="16" width="1" height="1" fill="#a9c0cc"/><rect x="1" y="17" width="1" height="1" fill="#0a2030"/><rect x="3" y="16" width="1" height="1" fill="#a9c0cc"/><rect x="4" y="17" width="1" height="1" fill="#0a2030"/><rect x="6" y="16" width="1" height="1" fill="#a9c0cc"/><rect x="7" y="17" width="1" height="1" fill="#0a2030"/><rect x="0" y="20" width="1" height="1" fill="#a9c0cc"/><rect x="1" y="21" width="1" height="1" fill="#0a2030"/><rect x="3" y="20" width="1" height="1" fill="#a9c0cc"/><rect x="4" y="21" width="1" height="1" fill="#0a2030"/><rect x="6" y="20" width="1" height="1" fill="#a9c0cc"/><rect x="7" y="21" width="1" height="1" fill="#0a2030"/></svg>
<span class="t" style="left:1052.00px;top:849.99px;font-size:11px;line-height:15px;color:#f0f4f8;letter-spacing:0.118px;">понеділок, 07.07.2025  10:58:16</span>
<div style="left:338px;top:232px;width:590px;height:474px;background:#ececec;border:1px solid #fff;border-right-color:#8e8e8e;border-bottom-color:#8e8e8e;"></div>
<div style="left:341px;top:234px;width:584px;height:468px;background:#b9d5f9;border-left:1px solid #3a3a3a;border-right:1px solid #3a3a3a;"></div>
<div style="left:341px;top:701px;width:584px;height:1px;background:#3a3a3a;"></div>
<div style="left:342px;top:640px;width:582px;height:61px;background:linear-gradient(#b9d5f9 0%,#b4d0f5 35%,#9db9e2 75%,#8da8cd 100%);"></div>
<div style="left:341px;top:234px;width:584px;height:48px;background:#00006e;"></div>
<div style="left:342px;top:235px;width:582px;height:23px;background:linear-gradient(#9b9bd1,#6a6ab9);"></div>
<div style="left:342px;top:258px;width:582px;height:23px;background:linear-gradient(#000080 0%,#060684 30%,#3a3aa2 100%);"></div>
<div style="left:342px;top:235px;width:1px;height:46px;background:#8a8acc;"></div>
<div style="left:342px;top:281px;width:582px;height:1px;background:#e8eefc;"></div>
<span class="t" style="left:354.00px;top:242.00px;font-size:13px;line-height:17px;color:#ffff7a;font-weight:700;letter-spacing:0.478px;">Стол:  201</span>
<span class="t" style="left:354.00px;top:260.49px;font-size:11px;line-height:15px;color:#e4e4d4;letter-spacing:0.062px;">Властивості</span>
<svg style="left:878px;top:241px" width="28" height="34" viewBox="0 0 28 34"><circle cx="8.400" cy="3.700" r="3.300" fill="#000080"/><path d="M1 10Q1 7.300 3.500 7.300H13Q16 7.300 16.300 10V19.500H14.500L11 21V32.400H8.700V22H7.700V32.400H3.500V21L1 19.500z" fill="#000080"/><path d="M5 7.700H11V17L10.500 21H5z" fill="#fff"/><rect x="6.500" y="8.600" width="3.600" height="3" fill="#000"/><rect x="7.600" y="9.500" width="1.400" height="1.200" fill="#fff"/><path d="M16 11L18.500 13.600H27V15H17L15 13.500z" fill="#000080"/><path d="M19 13.600H27" stroke="#000060" stroke-width="1.200"/><path d="M21 12q-1.500-1.800 0-3.500M23.600 12q-1.500-1.800 0-3.500" stroke="#000" stroke-width="0.900" fill="none"/></svg>
<div style="left:351px;top:291px;width:110px;height:21px;background:linear-gradient(#b4cff4,#a6c5ee);border:1px solid #8fb2dc;border-bottom:none;border-radius:3px 3px 0 0;"></div>
<div style="left:464px;top:291px;width:110px;height:21px;background:linear-gradient(#b4cff4,#a6c5ee);border:1px solid #8fb2dc;border-bottom:none;border-radius:3px 3px 0 0;"></div>
<div style="left:690px;top:291px;width:111px;height:21px;background:linear-gradient(#b4cff4,#a6c5ee);border:1px solid #8fb2dc;border-bottom:none;border-radius:3px 3px 0 0;"></div>
<div style="left:803px;top:291px;width:111px;height:21px;background:linear-gradient(#b4cff4,#a6c5ee);border:1px solid #8fb2dc;border-bottom:none;border-radius:3px 3px 0 0;"></div>
<div style="left:350px;top:311px;width:565px;height:352px;background:#e4edfb;border:1px solid #4787e0;border-radius:0 0 3px 3px;"></div>
<div style="left:576px;top:288px;width:112px;height:24px;background:#e4edfb;border:1px solid #4787e0;border-bottom:none;border-radius:4px 4px 0 0;"></div>
<span class="t" style="left:384.50px;top:293.69px;font-size:11px;line-height:15px;color:#7389a9;letter-spacing:-0.045px;">Загальні</span>
<span class="t" style="left:472.25px;top:293.69px;font-size:11px;line-height:15px;color:#7389a9;letter-spacing:-0.093px;">Автододані позиції</span>
<span class="t" style="left:601.00px;top:293.19px;font-size:11px;line-height:15px;color:#00007a;letter-spacing:-0.191px;">Бронювання</span>
<span class="t" style="left:725.00px;top:293.69px;font-size:11px;line-height:15px;color:#7389a9;letter-spacing:-0.100px;">Послуги</span>
<span class="t" style="left:805.50px;top:293.69px;font-size:11px;line-height:15px;color:#7389a9;letter-spacing:-0.092px;">Замена предприятий</span>
<div style="left:361px;top:327px;width:540px;height:77px;border:1px solid #3f6fc4;border-radius:6px;"></div>
<div style="left:371px;top:320px;width:206px;height:15px;background:#e4edfb;"></div>
<div style="left:371px;top:321px;width:13px;height:13px;background:linear-gradient(135deg,#d8dce4,#f4f6fa);border:1px solid #8a8f98;"></div>
<svg style="left:373px;top:323px" width="10" height="9" viewBox="0 0 10 9"><path d="M1 4l2.500 3.500L8.500 0.800" stroke="#3a4a9a" stroke-width="1.800" fill="none"/></svg>
<span class="t" style="left:388.30px;top:320.99px;font-size:11px;line-height:15px;color:#00007a;font-weight:700;letter-spacing:0.210px;">Бронирование столов, [час:мин]</span>
<span class="t" style="left:370.80px;top:347.99px;font-size:11px;line-height:15px;color:#00006a;letter-spacing:-0.019px;">Початок броні, не раніше:</span>
<span class="t" style="left:370.80px;top:371.99px;font-size:11px;line-height:15px;color:#00006a;letter-spacing:-0.071px;">Закінчення броні, не пізніше:</span>
<span class="t" style="left:648.00px;top:347.99px;font-size:11px;line-height:15px;color:#00006a;letter-spacing:0.009px;">Типова тривалість броні:</span>
<span class="t" style="left:648.00px;top:371.99px;font-size:11px;line-height:15px;color:#00006a;letter-spacing:0.006px;">Типова тривалість паузи:</span>
<div style="left:529px;top:345px;width:63px;height:19px;background:#fff;border:1px solid #3a78d8;border-radius:3.500px;"></div>
<div style="left:533px;top:347px;width:8px;height:15px;background:#0a78d7;"></div>
<div style="left:541px;top:347px;width:8px;height:15px;background:#cfe8cb;"></div>
<div style="left:576px;top:347px;width:14px;height:7px;background:#fff;border:1px solid #b2b2b2;border-radius:3px;"></div>
<svg style="left:580.5px;top:349px" width="5" height="3" viewBox="0 0 5 3"><path d="M0 3L2.500 0 5 3z" fill="#111"/></svg>
<div style="left:576px;top:355px;width:14px;height:7px;background:#fff;border:1px solid #b2b2b2;border-radius:3px;"></div>
<svg style="left:580.5px;top:357px" width="5" height="3" viewBox="0 0 5 3"><path d="M0 0L2.500 3 5 0z" fill="#111"/></svg>
<span class="t" style="left:534.30px;top:347.89px;font-size:11px;line-height:15px;color:#fff;font-weight:700;">0</span>
<span class="t" style="left:541.50px;top:347.89px;font-size:11px;line-height:15px;color:#00006a;font-weight:700;transform:scaleX(1.2264);transform-origin:0 50%;">9:00</span>
<div style="left:529px;top:369px;width:63px;height:19px;background:#fff;border:1px solid #b4b6ba;border-radius:3.500px;"></div>
<div style="left:576px;top:371px;width:14px;height:7px;background:#fff;border:1px solid #b2b2b2;border-radius:3px;"></div>
<svg style="left:580.5px;top:373px" width="5" height="3" viewBox="0 0 5 3"><path d="M0 3L2.500 0 5 3z" fill="#111"/></svg>
<div style="left:576px;top:379px;width:14px;height:7px;background:#fff;border:1px solid #b2b2b2;border-radius:3px;"></div>
<svg style="left:580.5px;top:381px" width="5" height="3" viewBox="0 0 5 3"><path d="M0 0L2.500 3 5 0z" fill="#111"/></svg>
<span class="t" style="left:534.60px;top:371.89px;font-size:11px;line-height:15px;color:#00006a;font-weight:700;transform:scaleX(1.2263);transform-origin:0 50%;">23:00</span>
<div style="left:826px;top:345px;width:63px;height:19px;background:#fff;border:1px solid #b4b6ba;border-radius:3.500px;"></div>
<div style="left:873px;top:347px;width:14px;height:7px;background:#fff;border:1px solid #b2b2b2;border-radius:3px;"></div>
<svg style="left:877.5px;top:349px" width="5" height="3" viewBox="0 0 5 3"><path d="M0 3L2.500 0 5 3z" fill="#111"/></svg>
<div style="left:873px;top:355px;width:14px;height:7px;background:#fff;border:1px solid #b2b2b2;border-radius:3px;"></div>
<svg style="left:877.5px;top:357px" width="5" height="3" viewBox="0 0 5 3"><path d="M0 0L2.500 3 5 0z" fill="#111"/></svg>
<span class="t" style="left:831.60px;top:347.89px;font-size:11px;line-height:15px;color:#00006a;font-weight:700;transform:scaleX(1.2263);transform-origin:0 50%;">01:00</span>
<div style="left:826px;top:369px;width:63px;height:19px;background:#fff;border:1px solid #b4b6ba;border-radius:3.500px;"></div>
<div style="left:873px;top:371px;width:14px;height:7px;background:#fff;border:1px solid #b2b2b2;border-radius:3px;"></div>
<svg style="left:877.5px;top:373px" width="5" height="3" viewBox="0 0 5 3"><path d="M0 3L2.500 0 5 3z" fill="#111"/></svg>
<div style="left:873px;top:379px;width:14px;height:7px;background:#fff;border:1px solid #b2b2b2;border-radius:3px;"></div>
<svg style="left:877.5px;top:381px" width="5" height="3" viewBox="0 0 5 3"><path d="M0 0L2.500 3 5 0z" fill="#111"/></svg>
<span class="t" style="left:831.60px;top:371.89px;font-size:11px;line-height:15px;color:#00006a;font-weight:700;transform:scaleX(1.2263);transform-origin:0 50%;">00:00</span>
<div style="left:365px;top:422px;width:272px;height:226px;border:1px solid #3f6fc4;border-radius:6px;"></div>
<div style="left:375px;top:416px;width:59px;height:15px;background:#e4edfb;"></div>
<span class="t" style="left:379.00px;top:416.39px;font-size:11px;line-height:15px;color:#00007a;font-weight:700;letter-spacing:0.679px;">Депозит</span>
<span class="t" style="left:373.50px;top:446.69px;font-size:11px;line-height:15px;color:#00006a;letter-spacing:-0.099px;">Сумма депозита:</span>
<div style="left:493px;top:444px;width:120px;height:18px;background:#fff;border:1px solid #b4b8c0;border-radius:3px;"></div>
<span class="t" style="left:497.00px;top:445.69px;font-size:11px;line-height:15px;color:#00006a;font-weight:700;">0</span>
<span class="t" style="left:373.50px;top:470.69px;font-size:11px;line-height:15px;color:#00006a;letter-spacing:0.147px;">Понедельник:</span>
<div style="left:493px;top:468px;width:120px;height:18px;background:#fff;border:1px solid #b4b8c0;border-radius:3px;"></div>
<span class="t" style="left:497.00px;top:469.69px;font-size:11px;line-height:15px;color:#00006a;font-weight:700;">0</span>
<span class="t" style="left:373.50px;top:494.69px;font-size:11px;line-height:15px;color:#00006a;letter-spacing:0.256px;">Вторник:</span>
<div style="left:493px;top:492px;width:120px;height:18px;background:#fff;border:1px solid #b4b8c0;border-radius:3px;"></div>
<span class="t" style="left:497.00px;top:493.69px;font-size:11px;line-height:15px;color:#00006a;font-weight:700;">0</span>
<span class="t" style="left:373.50px;top:518.69px;font-size:11px;line-height:15px;color:#00006a;letter-spacing:0.094px;">Среда:</span>
<div style="left:493px;top:516px;width:120px;height:18px;background:#fff;border:1px solid #b4b8c0;border-radius:3px;"></div>
<span class="t" style="left:497.00px;top:517.69px;font-size:11px;line-height:15px;color:#00006a;font-weight:700;">0</span>
<span class="t" style="left:373.50px;top:542.69px;font-size:11px;line-height:15px;color:#00006a;letter-spacing:0.408px;">Четверг:</span>
<div style="left:493px;top:540px;width:120px;height:18px;background:#fff;border:1px solid #b4b8c0;border-radius:3px;"></div>
<span class="t" style="left:497.00px;top:541.69px;font-size:11px;line-height:15px;color:#00006a;font-weight:700;">0</span>
<span class="t" style="left:373.50px;top:567.69px;font-size:11px;line-height:15px;color:#00006a;letter-spacing:0.058px;">Пятница:</span>
<div style="left:493px;top:566px;width:120px;height:18px;background:#fff;border:1px solid #b4b8c0;border-radius:3px;"></div>
<span class="t" style="left:497.00px;top:567.69px;font-size:11px;line-height:15px;color:#00006a;font-weight:700;">0</span>
<span class="t" style="left:373.50px;top:591.69px;font-size:11px;line-height:15px;color:#00006a;letter-spacing:0.124px;">Суббота:</span>
<div style="left:493px;top:590px;width:120px;height:18px;background:#fff;border:1px solid #b4b8c0;border-radius:3px;"></div>
<span class="t" style="left:497.00px;top:591.69px;font-size:11px;line-height:15px;color:#00006a;font-weight:700;">0</span>
<span class="t" style="left:373.50px;top:615.69px;font-size:11px;line-height:15px;color:#00006a;letter-spacing:-0.055px;">Воскресенье:</span>
<div style="left:493px;top:614px;width:120px;height:18px;background:#fff;border:1px solid #b4b8c0;border-radius:3px;"></div>
<span class="t" style="left:497.00px;top:615.69px;font-size:11px;line-height:15px;color:#00006a;font-weight:700;">0</span>
<div style="left:349px;top:671px;width:79px;height:23px;background:linear-gradient(#f4f4f4 0%,#ebebeb 46%,#dbdbdb 48%,#e5e5e5 100%);border:1px solid #6c6c6c;border-radius:3px;box-shadow:inset 0 0 0 1px #fff;"></div>
<svg style="left:359px;top:673px" width="17" height="17" viewBox="0 0 17 17"><rect x="1.500" y="5.800" width="8.300" height="10.600" fill="#fff" stroke="#0a0a0a" stroke-width="1.100"/><path d="M3.400 9.500h4.600M3.400 11.500h4.600M3.400 13.500h4.600" stroke="#6a6a6a" stroke-width="0.900"/><path d="M7.600 4.600Q7.600 2 11 2Q14.600 2 14.600 4.800Q14.600 6.800 12.300 8.200Q10.800 9.200 10.800 11.300" stroke="#0a0a0a" stroke-width="4" fill="none"/><rect x="8.700" y="12.200" width="4.200" height="3.900" fill="#0a0a0a"/><path d="M7.600 4.600Q7.600 2 11 2Q14.600 2 14.600 4.800Q14.600 6.800 12.300 8.200Q10.800 9.200 10.800 11.300" stroke="#fff200" stroke-width="2.100" fill="none"/><rect x="9.700" y="13.100" width="2.200" height="2.100" fill="#fff200"/></svg>
<span class="t" style="left:377.50px;top:675.69px;font-size:11px;line-height:15px;color:#00684e;letter-spacing:0.072px;">Довідка</span>
<div style="left:713px;top:671px;width:67px;height:23px;background:linear-gradient(#f4f4f4 0%,#ebebeb 46%,#dbdbdb 48%,#e5e5e5 100%);border:1px solid #6c6c6c;border-radius:3px;box-shadow:inset 0 0 0 1px #fff;"></div>
<span class="t" style="left:738.05px;top:675.69px;font-size:11px;line-height:15px;color:#00007a;transform:scaleX(0.9438);transform-origin:50% 50%;">OK</span>
<div style="left:781px;top:671px;width:66px;height:23px;background:#f3f3f3;border:1px solid #c8c8c8;border-radius:3px;box-shadow:inset 0 0 0 1px #fff;"></div>
<span class="t" style="left:782.00px;top:675.69px;font-size:11px;line-height:15px;color:#8c8c96;letter-spacing:0.093px;">Застосувати</span>
<div style="left:849px;top:671px;width:67px;height:23px;background:linear-gradient(#f4f4f4 0%,#ebebeb 46%,#dbdbdb 48%,#e5e5e5 100%);border:1px solid #6c6c6c;border-radius:3px;box-shadow:inset 0 0 0 1px #fff;"></div>
<span class="t" style="left:855.50px;top:675.69px;font-size:11px;line-height:15px;color:#8a0a0a;letter-spacing:0.138px;">Скасувати</span>
<svg style="left:270px;top:235px" width="110" height="100" viewBox="270 235 110 100"><path d="M280.500 249.500L352 306" stroke="#ff0000" stroke-width="5.400" stroke-linecap="round"/><path d="M369.500 320.200L355.200 299.300 345.500 310.900z" fill="#ff0000"/></svg>
</div>
</body></html>
